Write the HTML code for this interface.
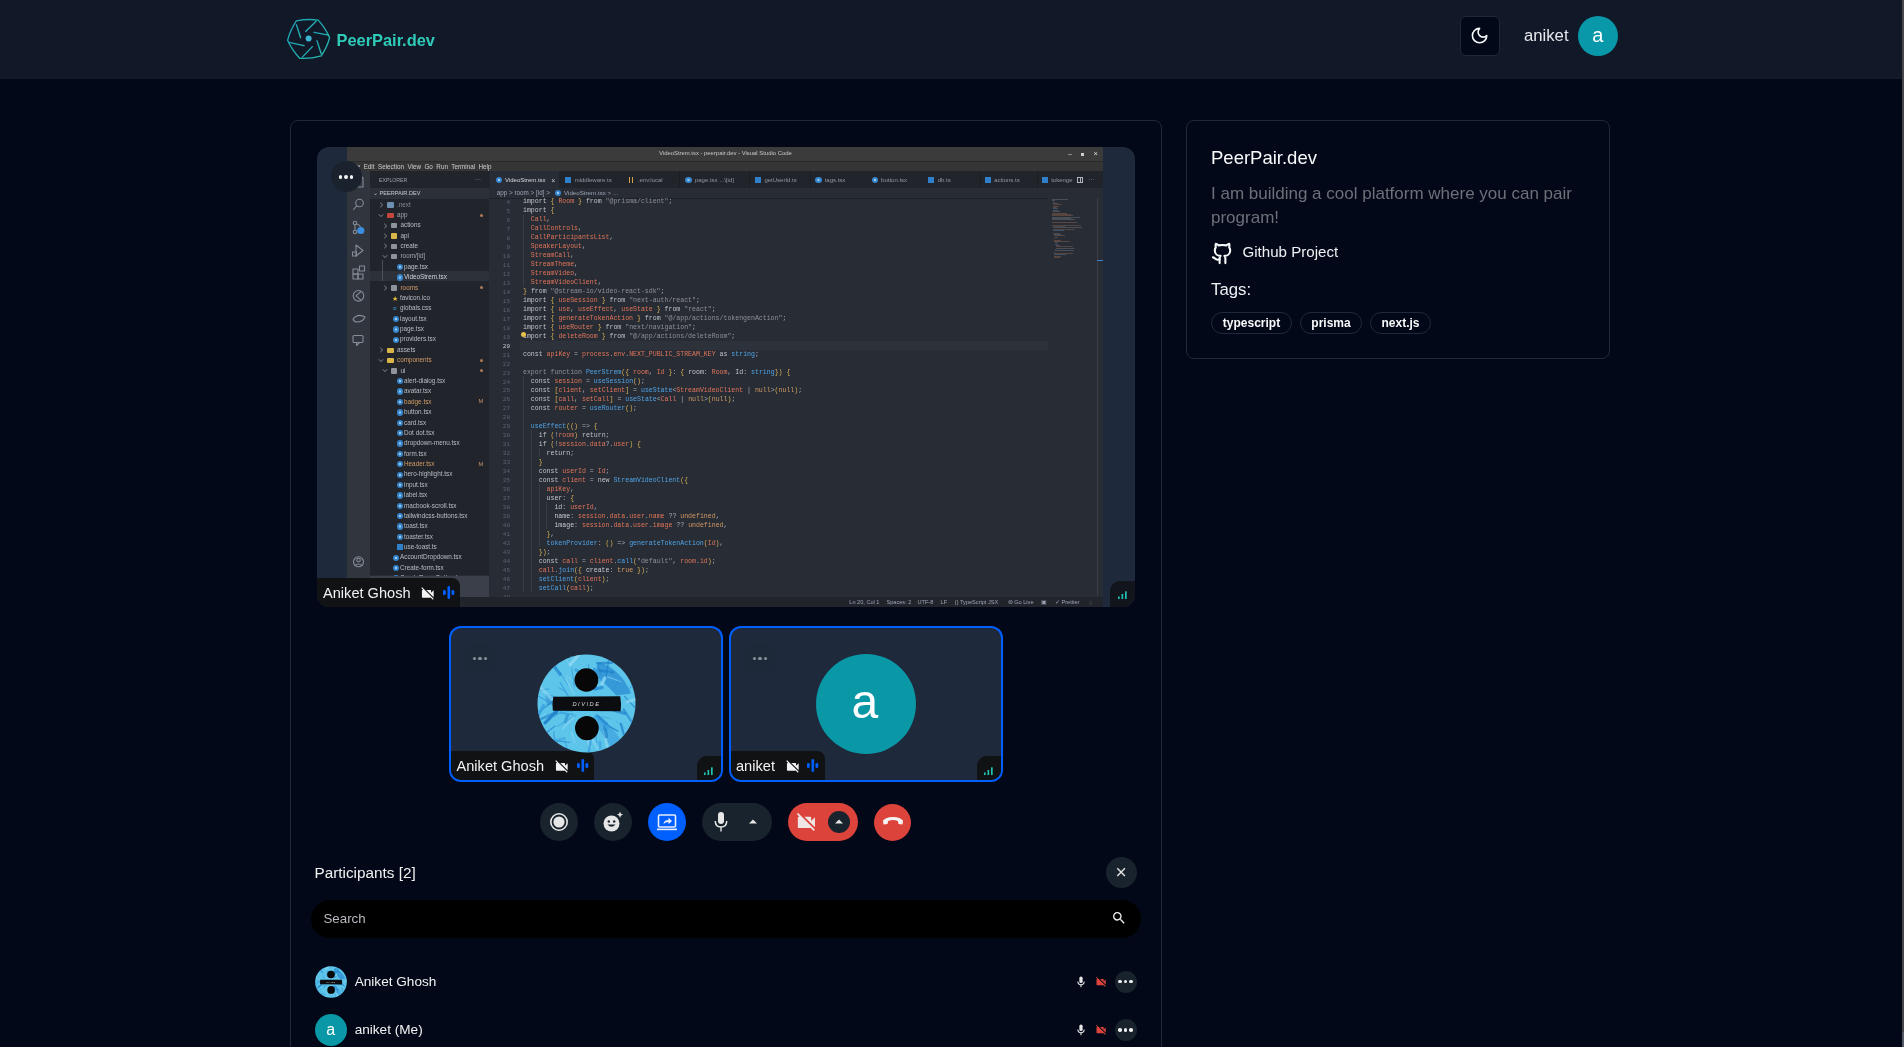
<!DOCTYPE html>
<html><head><meta charset="utf-8">
<style>
*{box-sizing:border-box;margin:0;padding:0}
html,body{width:1904px;height:1047px;overflow:hidden;background:#020817}
body{position:relative;font-family:"Liberation Sans",sans-serif;color:#f8fafc}
.abs{position:absolute}
.t{position:absolute;white-space:nowrap;line-height:1}
.card{position:absolute;border:1px solid #1e293b;border-radius:8px}
#vsc .t{font-family:"Liberation Sans",sans-serif}
.cl{position:absolute;white-space:pre;line-height:1;font-family:"Liberation Mono",monospace}
</style></head><body><div id="root" style="position:absolute;left:0;top:0;width:1904px;height:1047px;will-change:transform;background:#020817">
<div class="abs" style="left:0;top:0;width:1904px;height:79px;background:#111827;border-bottom:1px solid #131b29"></div><svg class="abs" style="left:280px;top:10px" width="60" height="60" viewBox="0 0 60 60">
<defs><linearGradient id="lg" x1="0" y1="0" x2="1" y2="1"><stop offset="0" stop-color="#1b9fb3"/><stop offset="1" stop-color="#27bcb0"/></linearGradient></defs>
<g fill="none" stroke="url(#lg)" stroke-width="1.35" stroke-linecap="round" stroke-linejoin="round"><path d="M16.4,10.9 Q27.2,8.6 38.2,10.1 Q45.4,17.9 49.6,27.7 Q47.1,37.5 41.2,45.8 Q30.6,48.9 19.7,48.3 Q12.1,40.3 7.6,30.3 Q10.3,19.8 16.4,10.9 Z"/><line x1="36.1" y1="11.3" x2="25.6" y2="21.4"/><line x1="16.4" y1="14.7" x2="20.6" y2="27.7"/><line x1="34.0" y1="22.3" x2="48.7" y2="25.2"/><line x1="37.0" y1="30.7" x2="41.2" y2="43.7"/><line x1="32.4" y1="36.6" x2="22.3" y2="47.1"/><line x1="9.2" y1="32.4" x2="24.0" y2="35.7"/></g>
<circle cx="28.600000000000023" cy="28.6" r="3" fill="#3cb4d2"/></svg><div class="t" style="left:336.50px;top:32.12px;font-size:16.4px;color:#2fcbb9;font-weight:bold;font-family:"Liberation Sans",sans-serif;">PeerPair.dev</div><div class="abs" style="left:1460px;top:16px;width:40px;height:40px;border:1px solid #1e293b;border-radius:6px;background:#020817"></div><svg class="abs" style="left:1470px;top:26px" width="19.2" height="19.2" viewBox="0 0 24 24" fill="none" stroke="#f8fafc" stroke-width="2" stroke-linecap="round" stroke-linejoin="round"><path d="M12 3a6 6 0 0 0 9 9 9 9 0 1 1-9-9Z"/></svg><div class="t" style="left:1524.00px;top:27.56px;font-size:16.7px;color:#e5e7eb;font-weight:normal;font-family:"Liberation Sans",sans-serif;">aniket</div><div class="abs" style="left:1578px;top:16px;width:40px;height:40px;border-radius:50%;background:#0898a9"></div><div class="t" style="left:1592.20px;top:25.07px;font-size:20px;color:#ffffff;font-weight:normal;font-family:"Liberation Sans",sans-serif;">a</div><div class="card" style="left:290px;top:120px;width:872px;height:1000px"></div><div class="card" style="left:1186px;top:120px;width:424px;height:239px"></div><div class="t" style="left:1211.00px;top:149.44px;font-size:18.5px;color:#f8fafc;font-weight:normal;font-family:"Liberation Sans",sans-serif;">PeerPair.dev</div><div class="t" style="left:1211.00px;top:185.01px;font-size:17px;color:#6d7079;font-weight:normal;font-family:"Liberation Sans",sans-serif;">I am building a cool platform where you can pair</div><div class="t" style="left:1211.00px;top:209.01px;font-size:17px;color:#6d7079;font-weight:normal;font-family:"Liberation Sans",sans-serif;">program!</div><svg class="abs" style="left:1210.5px;top:241.5px" width="23" height="23" viewBox="0 0 24 24" fill="none" stroke="#f8fafc" stroke-width="2.2" stroke-linecap="round" stroke-linejoin="round"><path d="M15 22v-4a4.8 4.8 0 0 0-1-3.5c3 0 6-2 6-5.5.08-1.25-.27-2.48-1-3.5.28-1.15.28-2.35 0-3.5 0 0-1 0-3 1.5-2.64-.5-5.36-.5-8 0C6 2 5 2 5 2c-.3 1.15-.3 2.35 0 3.5A5.403 5.403 0 0 0 4 9c0 3.5 3 5.5 6 5.5-.39.49-.68 1.05-.85 1.65-.17.6-.22 1.23-.15 1.85v4"/><path d="M9 18c-4.51 2-5-2-7-2"/></svg><div class="t" style="left:1242.50px;top:244.22px;font-size:15.1px;color:#eef0f3;font-weight:normal;font-family:"Liberation Sans",sans-serif;">Github Project</div><div class="t" style="left:1211.00px;top:281.78px;font-size:16.8px;color:#eef0f3;font-weight:normal;font-family:"Liberation Sans",sans-serif;">Tags:</div><div class="abs" style="left:1211px;top:312px;width:81px;height:22px;border:1px solid #1e293b;border-radius:11px;font-size:12px;font-weight:bold;color:#f8fafc;text-align:center;line-height:20px">typescript</div><div class="abs" style="left:1300px;top:312px;width:62px;height:22px;border:1px solid #1e293b;border-radius:11px;font-size:12px;font-weight:bold;color:#f8fafc;text-align:center;line-height:20px">prisma</div><div class="abs" style="left:1370px;top:312px;width:61px;height:22px;border:1px solid #1e293b;border-radius:11px;font-size:12px;font-weight:bold;color:#f8fafc;text-align:center;line-height:20px">next.js</div><div class="abs" style="left:317px;top:147px;width:818px;height:460px;background:#1e293b;border-radius:12px;overflow:hidden"><div id="vsc" class="abs" style="left:30px;top:0;width:756px;height:460px;background:#282c34;overflow:hidden"><div class="abs" style="left:0.0px;top:0.0px;width:756.0px;height:14.3px;background:#3b3b3b;"></div><div class="abs" style="left:0.0px;top:14.3px;width:756.0px;height:9.9px;background:#353535;"></div><div class="abs" style="left:0.0px;top:14.0px;width:756.0px;height:1.0px;background:#2b2b2b;"></div><div class="t" style="left:312.00px;top:3.81px;font-size:5.9px;color:#c8c8c8;font-weight:normal;font-family:"Liberation Sans",sans-serif;">VideoStrem.tsx - peerpair.dev - Visual Studio Code</div><div class="t" style="left:721.00px;top:2.57px;font-size:7px;color:#cfcfcf;font-weight:normal;font-family:"Liberation Sans",sans-serif;">&#8211;</div><div class="abs" style="left:734.0px;top:6.0px;width:3.0px;height:2.5px;background:#cfcfcf;"></div><div class="t" style="left:746.50px;top:3.15px;font-size:7.5px;color:#dcdcdc;font-weight:normal;font-family:"Liberation Sans",sans-serif;">&#215;</div><div class="t" style="left:3.00px;top:16.97px;font-size:6.3px;color:#cfcfcf;font-weight:normal;font-family:"Liberation Sans",sans-serif;">File&nbsp; Edit&nbsp; Selection&nbsp; View&nbsp; Go&nbsp; Run&nbsp; Terminal&nbsp; Help</div><div class="abs" style="left:0.0px;top:24.2px;width:23.0px;height:425.3px;background:#30353e;"></div><div class="abs" style="left:23.0px;top:24.2px;width:119.0px;height:404.3px;background:#21252b;"></div><div class="t" style="left:32.00px;top:30.90px;font-size:5.2px;color:#9aa0a9;font-weight:normal;font-family:"Liberation Sans",sans-serif;">EXPLORER</div><div class="t" style="left:128.00px;top:28.92px;font-size:6px;color:#aab0ba;font-weight:normal;font-family:"Liberation Sans",sans-serif;">&#183;&#183;&#183;</div><div class="abs" style="left:23.0px;top:41.0px;width:119.0px;height:10.5px;background:#2b3039;"></div><div class="t" style="left:26.00px;top:44.26px;font-size:5.6px;color:#c0c4cc;font-weight:normal;font-family:"Liberation Sans",sans-serif;">&#8964;</div><div class="t" style="left:32.50px;top:44.26px;font-size:5.6px;color:#c8ccd4;font-weight:normal;font-family:"Liberation Sans",sans-serif;">PEERPAIR.DEV</div><div class="abs" style="left:23.0px;top:124.0px;width:119.0px;height:10.3px;background:#2c313a;"></div><svg class="abs" style="left:32.0px;top:54.8px" width="5" height="6" viewBox="0 0 5 6"><path d="M1.3 0.8 L3.6 3 L1.3 5.2" fill="none" stroke="#a0a5ad" stroke-width="0.8"/></svg><div class="abs" style="left:40.0px;top:55.3px;width:6.5px;height:5.3px;background:#6c8fb2;border-radius:1px"></div><div class="t" style="left:50.00px;top:54.52px;font-size:6.35px;color:#7f8590;font-weight:normal;font-family:"Liberation Sans",sans-serif;">.next</div><svg class="abs" style="left:31.0px;top:65.7px" width="6" height="5" viewBox="0 0 6 5"><path d="M0.8 1.3 L3 3.6 L5.2 1.3" fill="none" stroke="#a0a5ad" stroke-width="0.8"/></svg><div class="abs" style="left:40.0px;top:65.7px;width:6.5px;height:5.3px;background:#c4463d;border-radius:1px"></div><div class="t" style="left:50.00px;top:64.90px;font-size:6.35px;color:#9da3ad;font-weight:normal;font-family:"Liberation Sans",sans-serif;">app</div><div class="abs" style="left:133px;top:66.7px;width:3px;height:3px;border-radius:50%;background:#b07a55"></div><svg class="abs" style="left:35.5px;top:75.6px" width="5" height="6" viewBox="0 0 5 6"><path d="M1.3 0.8 L3.6 3 L1.3 5.2" fill="none" stroke="#a0a5ad" stroke-width="0.8"/></svg><div class="abs" style="left:43.5px;top:76.1px;width:6.5px;height:5.3px;background:#8d929b;border-radius:1px"></div><div class="t" style="left:53.50px;top:75.28px;font-size:6.35px;color:#b8bcc4;font-weight:normal;font-family:"Liberation Sans",sans-serif;">actions</div><svg class="abs" style="left:35.5px;top:85.9px" width="5" height="6" viewBox="0 0 5 6"><path d="M1.3 0.8 L3.6 3 L1.3 5.2" fill="none" stroke="#a0a5ad" stroke-width="0.8"/></svg><div class="abs" style="left:43.5px;top:86.4px;width:6.5px;height:5.3px;background:#d9b54a;border-radius:1px"></div><div class="t" style="left:53.50px;top:85.66px;font-size:6.35px;color:#b8bcc4;font-weight:normal;font-family:"Liberation Sans",sans-serif;">api</div><svg class="abs" style="left:35.5px;top:96.3px" width="5" height="6" viewBox="0 0 5 6"><path d="M1.3 0.8 L3.6 3 L1.3 5.2" fill="none" stroke="#a0a5ad" stroke-width="0.8"/></svg><div class="abs" style="left:43.5px;top:96.8px;width:6.5px;height:5.3px;background:#8d929b;border-radius:1px"></div><div class="t" style="left:53.50px;top:96.04px;font-size:6.35px;color:#b8bcc4;font-weight:normal;font-family:"Liberation Sans",sans-serif;">create</div><svg class="abs" style="left:34.5px;top:107.2px" width="6" height="5" viewBox="0 0 6 5"><path d="M0.8 1.3 L3 3.6 L5.2 1.3" fill="none" stroke="#a0a5ad" stroke-width="0.8"/></svg><div class="abs" style="left:43.5px;top:107.2px;width:6.5px;height:5.3px;background:#8d929b;border-radius:1px"></div><div class="t" style="left:53.50px;top:106.42px;font-size:6.35px;color:#9da3ad;font-weight:normal;font-family:"Liberation Sans",sans-serif;">room/[id]</div><div class="abs" style="left:49.5px;top:116.9px;width:6.4px;height:6.4px;border-radius:50%;background:radial-gradient(circle,#9cc8ee 0 18%,#3a8ad0 30%,#2f7cc4 100%)"></div><div class="t" style="left:57.00px;top:116.80px;font-size:6.35px;color:#c0c4cc;font-weight:normal;font-family:"Liberation Sans",sans-serif;">page.tsx</div><div class="abs" style="left:49.5px;top:127.3px;width:6.4px;height:6.4px;border-radius:50%;background:radial-gradient(circle,#9cc8ee 0 18%,#3a8ad0 30%,#2f7cc4 100%)"></div><div class="t" style="left:57.00px;top:127.18px;font-size:6.35px;color:#d0d4dc;font-weight:normal;font-family:"Liberation Sans",sans-serif;">VideoStrem.tsx</div><svg class="abs" style="left:35.5px;top:137.8px" width="5" height="6" viewBox="0 0 5 6"><path d="M1.3 0.8 L3.6 3 L1.3 5.2" fill="none" stroke="#a0a5ad" stroke-width="0.8"/></svg><div class="abs" style="left:43.5px;top:138.3px;width:6.5px;height:5.3px;background:#8d929b;border-radius:1px"></div><div class="t" style="left:53.50px;top:137.56px;font-size:6.35px;color:#d19a66;font-weight:normal;font-family:"Liberation Sans",sans-serif;">rooms</div><div class="abs" style="left:133px;top:139.3px;width:3px;height:3px;border-radius:50%;background:#b07a55"></div><div class="t" style="left:45.00px;top:147.89px;font-size:7px;color:#e8b83a;font-weight:normal;font-family:"Liberation Sans",sans-serif;">&#9733;</div><div class="t" style="left:53.00px;top:147.94px;font-size:6.35px;color:#b8bcc4;font-weight:normal;font-family:"Liberation Sans",sans-serif;">favicon.ico</div><div class="t" style="left:45.50px;top:158.27px;font-size:7px;color:#3d9fe0;font-weight:bold;font-family:"Liberation Sans",sans-serif;">&#8801;</div><div class="t" style="left:53.00px;top:158.32px;font-size:6.35px;color:#b8bcc4;font-weight:normal;font-family:"Liberation Sans",sans-serif;">globals.css</div><div class="abs" style="left:45.5px;top:168.8px;width:6.4px;height:6.4px;border-radius:50%;background:radial-gradient(circle,#9cc8ee 0 18%,#3a8ad0 30%,#2f7cc4 100%)"></div><div class="t" style="left:53.00px;top:168.70px;font-size:6.35px;color:#b8bcc4;font-weight:normal;font-family:"Liberation Sans",sans-serif;">layout.tsx</div><div class="abs" style="left:45.5px;top:179.2px;width:6.4px;height:6.4px;border-radius:50%;background:radial-gradient(circle,#9cc8ee 0 18%,#3a8ad0 30%,#2f7cc4 100%)"></div><div class="t" style="left:53.00px;top:179.08px;font-size:6.35px;color:#b8bcc4;font-weight:normal;font-family:"Liberation Sans",sans-serif;">page.tsx</div><div class="abs" style="left:45.5px;top:189.5px;width:6.4px;height:6.4px;border-radius:50%;background:radial-gradient(circle,#9cc8ee 0 18%,#3a8ad0 30%,#2f7cc4 100%)"></div><div class="t" style="left:53.00px;top:189.46px;font-size:6.35px;color:#b8bcc4;font-weight:normal;font-family:"Liberation Sans",sans-serif;">providers.tsx</div><svg class="abs" style="left:32.0px;top:200.1px" width="5" height="6" viewBox="0 0 5 6"><path d="M1.3 0.8 L3.6 3 L1.3 5.2" fill="none" stroke="#a0a5ad" stroke-width="0.8"/></svg><div class="abs" style="left:40.0px;top:200.6px;width:6.5px;height:5.3px;background:#d9b54a;border-radius:1px"></div><div class="t" style="left:50.00px;top:199.84px;font-size:6.35px;color:#b8bcc4;font-weight:normal;font-family:"Liberation Sans",sans-serif;">assets</div><svg class="abs" style="left:31.0px;top:211.0px" width="6" height="5" viewBox="0 0 6 5"><path d="M0.8 1.3 L3 3.6 L5.2 1.3" fill="none" stroke="#a0a5ad" stroke-width="0.8"/></svg><div class="abs" style="left:40.0px;top:211.0px;width:6.5px;height:5.3px;background:#d9b54a;border-radius:1px"></div><div class="t" style="left:50.00px;top:210.22px;font-size:6.35px;color:#d19a66;font-weight:normal;font-family:"Liberation Sans",sans-serif;">components</div><div class="abs" style="left:133px;top:212.0px;width:3px;height:3px;border-radius:50%;background:#b07a55"></div><svg class="abs" style="left:34.5px;top:221.4px" width="6" height="5" viewBox="0 0 6 5"><path d="M0.8 1.3 L3 3.6 L5.2 1.3" fill="none" stroke="#a0a5ad" stroke-width="0.8"/></svg><div class="abs" style="left:43.5px;top:221.4px;width:6.5px;height:5.3px;background:#8d929b;border-radius:1px"></div><div class="t" style="left:53.50px;top:220.60px;font-size:6.35px;color:#b8bcc4;font-weight:normal;font-family:"Liberation Sans",sans-serif;">ui</div><div class="abs" style="left:133px;top:222.4px;width:3px;height:3px;border-radius:50%;background:#b07a55"></div><div class="abs" style="left:49.5px;top:231.1px;width:6.4px;height:6.4px;border-radius:50%;background:radial-gradient(circle,#9cc8ee 0 18%,#3a8ad0 30%,#2f7cc4 100%)"></div><div class="t" style="left:57.00px;top:230.98px;font-size:6.35px;color:#b8bcc4;font-weight:normal;font-family:"Liberation Sans",sans-serif;">alert-dialog.tsx</div><div class="abs" style="left:49.5px;top:241.4px;width:6.4px;height:6.4px;border-radius:50%;background:radial-gradient(circle,#9cc8ee 0 18%,#3a8ad0 30%,#2f7cc4 100%)"></div><div class="t" style="left:57.00px;top:241.36px;font-size:6.35px;color:#b8bcc4;font-weight:normal;font-family:"Liberation Sans",sans-serif;">avatar.tsx</div><div class="abs" style="left:49.5px;top:251.8px;width:6.4px;height:6.4px;border-radius:50%;background:radial-gradient(circle,#9cc8ee 0 18%,#3a8ad0 30%,#2f7cc4 100%)"></div><div class="t" style="left:57.00px;top:251.74px;font-size:6.35px;color:#d19a66;font-weight:normal;font-family:"Liberation Sans",sans-serif;">badge.tsx</div><div class="t" style="left:131.50px;top:252.38px;font-size:5.6px;color:#c9956a;font-weight:normal;font-family:"Liberation Sans",sans-serif;">M</div><div class="abs" style="left:49.5px;top:262.2px;width:6.4px;height:6.4px;border-radius:50%;background:radial-gradient(circle,#9cc8ee 0 18%,#3a8ad0 30%,#2f7cc4 100%)"></div><div class="t" style="left:57.00px;top:262.12px;font-size:6.35px;color:#b8bcc4;font-weight:normal;font-family:"Liberation Sans",sans-serif;">button.tsx</div><div class="abs" style="left:49.5px;top:272.6px;width:6.4px;height:6.4px;border-radius:50%;background:radial-gradient(circle,#9cc8ee 0 18%,#3a8ad0 30%,#2f7cc4 100%)"></div><div class="t" style="left:57.00px;top:272.50px;font-size:6.35px;color:#b8bcc4;font-weight:normal;font-family:"Liberation Sans",sans-serif;">card.tsx</div><div class="abs" style="left:49.5px;top:283.0px;width:6.4px;height:6.4px;border-radius:50%;background:radial-gradient(circle,#9cc8ee 0 18%,#3a8ad0 30%,#2f7cc4 100%)"></div><div class="t" style="left:57.00px;top:282.88px;font-size:6.35px;color:#b8bcc4;font-weight:normal;font-family:"Liberation Sans",sans-serif;">Dot dot.tsx</div><div class="abs" style="left:49.5px;top:293.3px;width:6.4px;height:6.4px;border-radius:50%;background:radial-gradient(circle,#9cc8ee 0 18%,#3a8ad0 30%,#2f7cc4 100%)"></div><div class="t" style="left:57.00px;top:293.26px;font-size:6.35px;color:#b8bcc4;font-weight:normal;font-family:"Liberation Sans",sans-serif;">dropdown-menu.tsx</div><div class="abs" style="left:49.5px;top:303.7px;width:6.4px;height:6.4px;border-radius:50%;background:radial-gradient(circle,#9cc8ee 0 18%,#3a8ad0 30%,#2f7cc4 100%)"></div><div class="t" style="left:57.00px;top:303.64px;font-size:6.35px;color:#b8bcc4;font-weight:normal;font-family:"Liberation Sans",sans-serif;">form.tsx</div><div class="abs" style="left:49.5px;top:314.1px;width:6.4px;height:6.4px;border-radius:50%;background:radial-gradient(circle,#9cc8ee 0 18%,#3a8ad0 30%,#2f7cc4 100%)"></div><div class="t" style="left:57.00px;top:314.02px;font-size:6.35px;color:#d19a66;font-weight:normal;font-family:"Liberation Sans",sans-serif;">Header.tsx</div><div class="t" style="left:131.50px;top:314.66px;font-size:5.6px;color:#c9956a;font-weight:normal;font-family:"Liberation Sans",sans-serif;">M</div><div class="abs" style="left:49.5px;top:324.5px;width:6.4px;height:6.4px;border-radius:50%;background:radial-gradient(circle,#9cc8ee 0 18%,#3a8ad0 30%,#2f7cc4 100%)"></div><div class="t" style="left:57.00px;top:324.40px;font-size:6.35px;color:#b8bcc4;font-weight:normal;font-family:"Liberation Sans",sans-serif;">hero-highlight.tsx</div><div class="abs" style="left:49.5px;top:334.9px;width:6.4px;height:6.4px;border-radius:50%;background:radial-gradient(circle,#9cc8ee 0 18%,#3a8ad0 30%,#2f7cc4 100%)"></div><div class="t" style="left:57.00px;top:334.78px;font-size:6.35px;color:#b8bcc4;font-weight:normal;font-family:"Liberation Sans",sans-serif;">input.tsx</div><div class="abs" style="left:49.5px;top:345.2px;width:6.4px;height:6.4px;border-radius:50%;background:radial-gradient(circle,#9cc8ee 0 18%,#3a8ad0 30%,#2f7cc4 100%)"></div><div class="t" style="left:57.00px;top:345.16px;font-size:6.35px;color:#b8bcc4;font-weight:normal;font-family:"Liberation Sans",sans-serif;">label.tsx</div><div class="abs" style="left:49.5px;top:355.6px;width:6.4px;height:6.4px;border-radius:50%;background:radial-gradient(circle,#9cc8ee 0 18%,#3a8ad0 30%,#2f7cc4 100%)"></div><div class="t" style="left:57.00px;top:355.54px;font-size:6.35px;color:#b8bcc4;font-weight:normal;font-family:"Liberation Sans",sans-serif;">macbook-scroll.tsx</div><div class="abs" style="left:49.5px;top:366.0px;width:6.4px;height:6.4px;border-radius:50%;background:radial-gradient(circle,#9cc8ee 0 18%,#3a8ad0 30%,#2f7cc4 100%)"></div><div class="t" style="left:57.00px;top:365.92px;font-size:6.35px;color:#b8bcc4;font-weight:normal;font-family:"Liberation Sans",sans-serif;">tailwindcss-buttons.tsx</div><div class="abs" style="left:49.5px;top:376.4px;width:6.4px;height:6.4px;border-radius:50%;background:radial-gradient(circle,#9cc8ee 0 18%,#3a8ad0 30%,#2f7cc4 100%)"></div><div class="t" style="left:57.00px;top:376.30px;font-size:6.35px;color:#b8bcc4;font-weight:normal;font-family:"Liberation Sans",sans-serif;">toast.tsx</div><div class="abs" style="left:49.5px;top:386.8px;width:6.4px;height:6.4px;border-radius:50%;background:radial-gradient(circle,#9cc8ee 0 18%,#3a8ad0 30%,#2f7cc4 100%)"></div><div class="t" style="left:57.00px;top:386.68px;font-size:6.35px;color:#b8bcc4;font-weight:normal;font-family:"Liberation Sans",sans-serif;">toaster.tsx</div><div class="abs" style="left:49.5px;top:397.3px;width:6.0px;height:6.0px;background:#2f7fc9;"></div><div class="t" style="left:57.00px;top:397.06px;font-size:6.35px;color:#b8bcc4;font-weight:normal;font-family:"Liberation Sans",sans-serif;">use-toast.ts</div><div class="abs" style="left:45.5px;top:407.5px;width:6.4px;height:6.4px;border-radius:50%;background:radial-gradient(circle,#9cc8ee 0 18%,#3a8ad0 30%,#2f7cc4 100%)"></div><div class="t" style="left:53.00px;top:407.44px;font-size:6.35px;color:#b8bcc4;font-weight:normal;font-family:"Liberation Sans",sans-serif;">AccountDropdown.tsx</div><div class="abs" style="left:45.5px;top:417.9px;width:6.4px;height:6.4px;border-radius:50%;background:radial-gradient(circle,#9cc8ee 0 18%,#3a8ad0 30%,#2f7cc4 100%)"></div><div class="t" style="left:53.00px;top:417.82px;font-size:6.35px;color:#b8bcc4;font-weight:normal;font-family:"Liberation Sans",sans-serif;">Create-form.tsx</div><div class="abs" style="left:45.5px;top:428.3px;width:6.4px;height:6.4px;border-radius:50%;background:radial-gradient(circle,#9cc8ee 0 18%,#3a8ad0 30%,#2f7cc4 100%)"></div><div class="t" style="left:53.00px;top:428.20px;font-size:6.35px;color:#b8bcc4;font-weight:normal;font-family:"Liberation Sans",sans-serif;">CreateRoomButton.tsx</div><div class="abs" style="left:23.0px;top:428.5px;width:119.0px;height:21.0px;background:#3a3f4a;"></div><div class="abs" style="left:34.5px;top:113.0px;width:0.5px;height:21.0px;background:#4a4f58;"></div><svg class="abs" style="left:0;top:24.2px" width="23" height="425" viewBox="0 0 23 425">
<g fill="none" stroke="#868b94" stroke-width="1.1" stroke-linecap="round" stroke-linejoin="round">
<path d="M7 4 h6 l3 3 v9 h-9 z"/>
<circle cx="12.5" cy="32" r="3.8"/><line x1="9.8" y1="34.8" x2="6.5" y2="38.5"/>
<circle cx="8" cy="52" r="1.7"/><circle cx="8" cy="61" r="1.7"/><line x1="8" y1="53.7" x2="8" y2="59.3"/><path d="M9.5 53 q4 1 4 4"/>
<path d="M9 74 L16 79.5 L9 85 Z"/><rect x="5.5" y="81" width="4" height="4"/>
<rect x="6" y="98" width="5" height="5"/><rect x="6" y="103" width="5" height="5"/><rect x="11" y="103" width="5" height="5"/><rect x="12.5" y="95" width="5" height="5"/>
<circle cx="11.5" cy="124.8" r="5.3"/><path d="M14 120.5 l-5 4.3 l5 4.3"/>
<path d="M6 148 q5 -6 12 -2 q-2 5 -8 5 q-3 0 -4 -3z"/>
<rect x="6" y="164.5" width="10" height="7" rx="1"/><path d="M9.5 171.5 v3 l3 -3"/>
<circle cx="11.5" cy="390.8" r="5"/><circle cx="11.5" cy="389" r="1.8"/><path d="M8 394.5 q3.5 -3 7 0"/>
</g>
<circle cx="13.8" cy="59.5" r="3.6" fill="#3b8ee0"/>
</svg><div class="abs" style="left:142.0px;top:24.2px;width:614.0px;height:16.8px;background:#21252b;"></div><div class="abs" style="left:143.0px;top:24.2px;width:69.0px;height:16.8px;background:#282c34;"></div><div class="abs" style="left:148.5px;top:30.0px;width:6.4px;height:6.4px;border-radius:50%;background:radial-gradient(circle,#9cc8ee 0 18%,#3a8ad0 30%,#2f7cc4 100%)"></div><div class="t" style="left:158.00px;top:30.02px;font-size:6px;color:#d7dae0;font-weight:normal;font-family:"Liberation Sans",sans-serif;">VideoStrem.tsx</div><div class="abs" style="left:218.2px;top:30.0px;width:6.0px;height:6.0px;background:#2f7fc9;"></div><div class="t" style="left:227.70px;top:30.02px;font-size:6px;color:#8f96a1;font-weight:normal;font-family:"Liberation Sans",sans-serif;">middleware.ts</div><div class="abs" style="left:282.3px;top:30.0px;width:1.0px;height:6.0px;background:#d9a04a;"></div><div class="abs" style="left:285.3px;top:30.0px;width:1.0px;height:6.0px;background:#d9a04a;"></div><div class="t" style="left:290.80px;top:30.02px;font-size:6px;color:#8f96a1;font-weight:normal;font-family:"Liberation Sans",sans-serif;">.env.local</div><div class="abs" style="left:338.4px;top:30.0px;width:6.4px;height:6.4px;border-radius:50%;background:radial-gradient(circle,#9cc8ee 0 18%,#3a8ad0 30%,#2f7cc4 100%)"></div><div class="t" style="left:347.90px;top:30.02px;font-size:6px;color:#8f96a1;font-weight:normal;font-family:"Liberation Sans",sans-serif;">page.tsx ...\[id]</div><div class="abs" style="left:407.9px;top:30.0px;width:6.0px;height:6.0px;background:#2f7fc9;"></div><div class="t" style="left:417.40px;top:30.02px;font-size:6px;color:#8f96a1;font-weight:normal;font-family:"Liberation Sans",sans-serif;">getUserId.ts</div><div class="abs" style="left:468.2px;top:30.0px;width:6.4px;height:6.4px;border-radius:50%;background:radial-gradient(circle,#9cc8ee 0 18%,#3a8ad0 30%,#2f7cc4 100%)"></div><div class="t" style="left:477.70px;top:30.02px;font-size:6px;color:#8f96a1;font-weight:normal;font-family:"Liberation Sans",sans-serif;">tags.tsx</div><div class="abs" style="left:524.6px;top:30.0px;width:6.4px;height:6.4px;border-radius:50%;background:radial-gradient(circle,#9cc8ee 0 18%,#3a8ad0 30%,#2f7cc4 100%)"></div><div class="t" style="left:534.10px;top:30.02px;font-size:6px;color:#8f96a1;font-weight:normal;font-family:"Liberation Sans",sans-serif;">button.tsx</div><div class="abs" style="left:581.2px;top:30.0px;width:6.0px;height:6.0px;background:#2f7fc9;"></div><div class="t" style="left:590.70px;top:30.02px;font-size:6px;color:#8f96a1;font-weight:normal;font-family:"Liberation Sans",sans-serif;">db.ts</div><div class="abs" style="left:637.8px;top:30.0px;width:6.0px;height:6.0px;background:#2f7fc9;"></div><div class="t" style="left:647.30px;top:30.02px;font-size:6px;color:#8f96a1;font-weight:normal;font-family:"Liberation Sans",sans-serif;">actions.ts</div><div class="abs" style="left:694.7px;top:30.0px;width:6.0px;height:6.0px;background:#2f7fc9;"></div><div class="t" style="left:704.20px;top:30.02px;font-size:6px;color:#8f96a1;font-weight:normal;font-family:"Liberation Sans",sans-serif;">tokenge</div><div class="t" style="left:204.30px;top:29.57px;font-size:7px;color:#c8ccd4;font-weight:normal;font-family:"Liberation Sans",sans-serif;">&#215;</div><div class="abs" style="left:332.2px;top:24.2px;width:0.8px;height:16.8px;background:#1b1e23;"></div><div class="abs" style="left:401.9px;top:24.2px;width:0.8px;height:16.8px;background:#1b1e23;"></div><div class="abs" style="left:462.5px;top:24.2px;width:0.8px;height:16.8px;background:#1b1e23;"></div><div class="abs" style="left:632.6px;top:24.2px;width:0.8px;height:16.8px;background:#1b1e23;"></div><div class="abs" style="left:689.7px;top:24.2px;width:0.8px;height:16.8px;background:#1b1e23;"></div><div class="abs" style="left:730.0px;top:29.8px;width:6.0px;height:6.4px;background:transparent;border:1px solid #b0b4bb;border-left-width:1.5px;border-right-width:1.5px"></div><div class="abs" style="left:732.7px;top:29.8px;width:0.7px;height:6.4px;background:#b0b4bb;"></div><div class="t" style="left:741.50px;top:28.92px;font-size:6px;color:#b0b4bb;font-weight:normal;font-family:"Liberation Sans",sans-serif;">&#183;&#183;&#183;</div><div class="abs" style="left:142.0px;top:41.0px;width:614.0px;height:10.3px;background:#282c34;"></div><div class="abs" style="left:142.0px;top:51.3px;width:559.0px;height:1.0px;background:#1d2026;"></div><div class="t" style="left:149.80px;top:42.97px;font-size:6.3px;color:#9da5b4;font-weight:normal;font-family:"Liberation Sans",sans-serif;">app &gt; room &gt; [id] &gt;</div><div class="abs" style="left:207.5px;top:43.0px;width:6.4px;height:6.4px;border-radius:50%;background:radial-gradient(circle,#9cc8ee 0 18%,#3a8ad0 30%,#2f7cc4 100%)"></div><div class="t" style="left:217.00px;top:43.05px;font-size:6.2px;color:#9da5b4;font-weight:normal;font-family:"Liberation Sans",sans-serif;">VideoStrem.tsx &gt; ...</div><div class="abs" style="left:173.0px;top:193.5px;width:528.0px;height:9.0px;background:#2c313a;"></div><div class="abs" style="left:154.0px;top:193.5px;width:19.0px;height:9.0px;background:transparent;"></div><div class="cl" style="left:150px;width:13px;text-align:right;top:52.90px;font-size:6.0px;color:#5c6370">4</div><div class="cl" style="left:176px;top:52.48px;font-size:6.55px"><span style="color:#bfc2c8">import</span> <span style="color:#d8b255">{</span> <span style="color:#e0755a">Room</span> <span style="color:#d8b255">}</span> <span style="color:#bfc2c8">from</span> <span style="color:#8e9096">&quot;@prisma/client&quot;</span><span style="color:#a9aeb7">;</span></div><div class="cl" style="left:150px;width:13px;text-align:right;top:61.88px;font-size:6.0px;color:#5c6370">5</div><div class="cl" style="left:176px;top:61.46px;font-size:6.55px"><span style="color:#bfc2c8">import</span> <span style="color:#d8b255">{</span></div><div class="cl" style="left:150px;width:13px;text-align:right;top:70.86px;font-size:6.0px;color:#5c6370">6</div><div class="cl" style="left:176px;top:70.44px;font-size:6.55px">  <span style="color:#e0755a">Call</span><span style="color:#a9aeb7">,</span></div><div class="cl" style="left:150px;width:13px;text-align:right;top:79.84px;font-size:6.0px;color:#5c6370">7</div><div class="cl" style="left:176px;top:79.42px;font-size:6.55px">  <span style="color:#e0755a">CallControls</span><span style="color:#a9aeb7">,</span></div><div class="cl" style="left:150px;width:13px;text-align:right;top:88.82px;font-size:6.0px;color:#5c6370">8</div><div class="cl" style="left:176px;top:88.40px;font-size:6.55px">  <span style="color:#e0755a">CallParticipantsList</span><span style="color:#a9aeb7">,</span></div><div class="cl" style="left:150px;width:13px;text-align:right;top:97.80px;font-size:6.0px;color:#5c6370">9</div><div class="cl" style="left:176px;top:97.38px;font-size:6.55px">  <span style="color:#e0755a">SpeakerLayout</span><span style="color:#a9aeb7">,</span></div><div class="cl" style="left:150px;width:13px;text-align:right;top:106.78px;font-size:6.0px;color:#5c6370">10</div><div class="cl" style="left:176px;top:106.36px;font-size:6.55px">  <span style="color:#e0755a">StreamCall</span><span style="color:#a9aeb7">,</span></div><div class="cl" style="left:150px;width:13px;text-align:right;top:115.76px;font-size:6.0px;color:#5c6370">11</div><div class="cl" style="left:176px;top:115.34px;font-size:6.55px">  <span style="color:#e0755a">StreamTheme</span><span style="color:#a9aeb7">,</span></div><div class="cl" style="left:150px;width:13px;text-align:right;top:124.74px;font-size:6.0px;color:#5c6370">12</div><div class="cl" style="left:176px;top:124.32px;font-size:6.55px">  <span style="color:#e0755a">StreamVideo</span><span style="color:#a9aeb7">,</span></div><div class="cl" style="left:150px;width:13px;text-align:right;top:133.72px;font-size:6.0px;color:#5c6370">13</div><div class="cl" style="left:176px;top:133.30px;font-size:6.55px">  <span style="color:#e0755a">StreamVideoClient</span><span style="color:#a9aeb7">,</span></div><div class="cl" style="left:150px;width:13px;text-align:right;top:142.70px;font-size:6.0px;color:#5c6370">14</div><div class="cl" style="left:176px;top:142.28px;font-size:6.55px"><span style="color:#d8b255">}</span> <span style="color:#bfc2c8">from</span> <span style="color:#8e9096">&quot;@stream-io/video-react-sdk&quot;</span><span style="color:#a9aeb7">;</span></div><div class="cl" style="left:150px;width:13px;text-align:right;top:151.68px;font-size:6.0px;color:#5c6370">15</div><div class="cl" style="left:176px;top:151.26px;font-size:6.55px"><span style="color:#bfc2c8">import</span> <span style="color:#d8b255">{</span> <span style="color:#e0755a">useSession</span> <span style="color:#d8b255">}</span> <span style="color:#bfc2c8">from</span> <span style="color:#8e9096">&quot;next-auth/react&quot;</span><span style="color:#a9aeb7">;</span></div><div class="cl" style="left:150px;width:13px;text-align:right;top:160.66px;font-size:6.0px;color:#5c6370">16</div><div class="cl" style="left:176px;top:160.24px;font-size:6.55px"><span style="color:#bfc2c8">import</span> <span style="color:#d8b255">{</span> <span style="color:#e0755a">use</span><span style="color:#a9aeb7">,</span> <span style="color:#e0755a">useEffect</span><span style="color:#a9aeb7">,</span> <span style="color:#e0755a">useState</span> <span style="color:#d8b255">}</span> <span style="color:#bfc2c8">from</span> <span style="color:#8e9096">&quot;react&quot;</span><span style="color:#a9aeb7">;</span></div><div class="cl" style="left:150px;width:13px;text-align:right;top:169.64px;font-size:6.0px;color:#5c6370">17</div><div class="cl" style="left:176px;top:169.22px;font-size:6.55px"><span style="color:#bfc2c8">import</span> <span style="color:#d8b255">{</span> <span style="color:#e0755a">generateTokenAction</span> <span style="color:#d8b255">}</span> <span style="color:#bfc2c8">from</span> <span style="color:#8e9096">&quot;@/app/actions/tokengenAction&quot;</span><span style="color:#a9aeb7">;</span></div><div class="cl" style="left:150px;width:13px;text-align:right;top:178.62px;font-size:6.0px;color:#5c6370">18</div><div class="cl" style="left:176px;top:178.20px;font-size:6.55px"><span style="color:#bfc2c8">import</span> <span style="color:#d8b255">{</span> <span style="color:#e0755a">useRouter</span> <span style="color:#d8b255">}</span> <span style="color:#bfc2c8">from</span> <span style="color:#8e9096">&quot;next/navigation&quot;</span><span style="color:#a9aeb7">;</span></div><div class="cl" style="left:150px;width:13px;text-align:right;top:187.60px;font-size:6.0px;color:#5c6370">19</div><div class="cl" style="left:176px;top:187.18px;font-size:6.55px"><span style="color:#bfc2c8">import</span> <span style="color:#d8b255">{</span> <span style="color:#e0755a">deleteRoom</span> <span style="color:#d8b255">}</span> <span style="color:#bfc2c8">from</span> <span style="color:#8e9096">&quot;@/app/actions/deleteRoom&quot;</span><span style="color:#a9aeb7">;</span></div><div class="cl" style="left:150px;width:13px;text-align:right;top:196.58px;font-size:6.0px;color:#c8ccd4">20</div><div class="cl" style="left:150px;width:13px;text-align:right;top:205.56px;font-size:6.0px;color:#5c6370">21</div><div class="cl" style="left:176px;top:205.14px;font-size:6.55px"><span style="color:#bfc2c8">const</span> <span style="color:#e0755a">apiKey</span> <span style="color:#a9aeb7">=</span> <span style="color:#e0755a">process</span><span style="color:#a9aeb7">.</span><span style="color:#e0755a">env</span><span style="color:#a9aeb7">.</span><span style="color:#e0755a">NEXT_PUBLIC_STREAM_KEY</span> <span style="color:#bfc2c8">as</span> <span style="color:#4fa3e6">string</span><span style="color:#a9aeb7">;</span></div><div class="cl" style="left:150px;width:13px;text-align:right;top:214.54px;font-size:6.0px;color:#5c6370">22</div><div class="cl" style="left:150px;width:13px;text-align:right;top:223.52px;font-size:6.0px;color:#5c6370">23</div><div class="cl" style="left:176px;top:223.10px;font-size:6.55px"><span style="color:#8d9199">export</span> <span style="color:#8d9199">function</span> <span style="color:#4fa3e6">PeerStrem</span><span style="color:#d8b255">(</span><span style="color:#d8b255">{</span> <span style="color:#e0755a">room</span><span style="color:#a9aeb7">,</span> <span style="color:#e0755a">Id</span> <span style="color:#d8b255">}</span><span style="color:#a9aeb7">:</span> <span style="color:#d8b255">{</span> <span style="color:#c6c9ce">room</span><span style="color:#a9aeb7">:</span> <span style="color:#e0755a">Room</span><span style="color:#a9aeb7">,</span> <span style="color:#c6c9ce">Id</span><span style="color:#a9aeb7">:</span> <span style="color:#4fa3e6">string</span><span style="color:#d8b255">}</span><span style="color:#d8b255">)</span> <span style="color:#d8b255">{</span></div><div class="cl" style="left:150px;width:13px;text-align:right;top:232.50px;font-size:6.0px;color:#5c6370">24</div><div class="cl" style="left:176px;top:232.08px;font-size:6.55px">  <span style="color:#bfc2c8">const</span> <span style="color:#e0755a">session</span> <span style="color:#a9aeb7">=</span> <span style="color:#4fa3e6">useSession</span><span style="color:#d8b255">(</span><span style="color:#d8b255">)</span><span style="color:#a9aeb7">;</span></div><div class="cl" style="left:150px;width:13px;text-align:right;top:241.48px;font-size:6.0px;color:#5c6370">25</div><div class="cl" style="left:176px;top:241.06px;font-size:6.55px">  <span style="color:#bfc2c8">const</span> <span style="color:#d8b255">[</span><span style="color:#e0755a">client</span><span style="color:#a9aeb7">,</span> <span style="color:#e0755a">setClient</span><span style="color:#d8b255">]</span> <span style="color:#a9aeb7">=</span> <span style="color:#4fa3e6">useState</span><span style="color:#a9aeb7">&lt;</span><span style="color:#e0755a">StreamVideoClient</span> <span style="color:#a9aeb7">|</span> <span style="color:#d19a66">null</span><span style="color:#a9aeb7">&gt;</span><span style="color:#d8b255">(</span><span style="color:#d19a66">null</span><span style="color:#d8b255">)</span><span style="color:#a9aeb7">;</span></div><div class="cl" style="left:150px;width:13px;text-align:right;top:250.46px;font-size:6.0px;color:#5c6370">26</div><div class="cl" style="left:176px;top:250.04px;font-size:6.55px">  <span style="color:#bfc2c8">const</span> <span style="color:#d8b255">[</span><span style="color:#e0755a">call</span><span style="color:#a9aeb7">,</span> <span style="color:#e0755a">setCall</span><span style="color:#d8b255">]</span> <span style="color:#a9aeb7">=</span> <span style="color:#4fa3e6">useState</span><span style="color:#a9aeb7">&lt;</span><span style="color:#e0755a">Call</span> <span style="color:#a9aeb7">|</span> <span style="color:#d19a66">null</span><span style="color:#a9aeb7">&gt;</span><span style="color:#d8b255">(</span><span style="color:#d19a66">null</span><span style="color:#d8b255">)</span><span style="color:#a9aeb7">;</span></div><div class="cl" style="left:150px;width:13px;text-align:right;top:259.44px;font-size:6.0px;color:#5c6370">27</div><div class="cl" style="left:176px;top:259.02px;font-size:6.55px">  <span style="color:#bfc2c8">const</span> <span style="color:#e0755a">router</span> <span style="color:#a9aeb7">=</span> <span style="color:#4fa3e6">useRouter</span><span style="color:#d8b255">(</span><span style="color:#d8b255">)</span><span style="color:#a9aeb7">;</span></div><div class="cl" style="left:150px;width:13px;text-align:right;top:268.42px;font-size:6.0px;color:#5c6370">28</div><div class="cl" style="left:150px;width:13px;text-align:right;top:277.40px;font-size:6.0px;color:#5c6370">29</div><div class="cl" style="left:176px;top:276.98px;font-size:6.55px">  <span style="color:#4fa3e6">useEffect</span><span style="color:#d8b255">(</span><span style="color:#d8b255">(</span><span style="color:#d8b255">)</span> <span style="color:#a9aeb7">=</span><span style="color:#a9aeb7">&gt;</span> <span style="color:#d8b255">{</span></div><div class="cl" style="left:150px;width:13px;text-align:right;top:286.38px;font-size:6.0px;color:#5c6370">30</div><div class="cl" style="left:176px;top:285.96px;font-size:6.55px">    <span style="color:#bfc2c8">if</span> <span style="color:#d8b255">(</span><span style="color:#a9aeb7">!</span><span style="color:#e0755a">room</span><span style="color:#d8b255">)</span> <span style="color:#bfc2c8">return</span><span style="color:#a9aeb7">;</span></div><div class="cl" style="left:150px;width:13px;text-align:right;top:295.36px;font-size:6.0px;color:#5c6370">31</div><div class="cl" style="left:176px;top:294.94px;font-size:6.55px">    <span style="color:#bfc2c8">if</span> <span style="color:#d8b255">(</span><span style="color:#a9aeb7">!</span><span style="color:#e0755a">session</span><span style="color:#a9aeb7">.</span><span style="color:#e0755a">data</span><span style="color:#a9aeb7">?</span><span style="color:#a9aeb7">.</span><span style="color:#e0755a">user</span><span style="color:#d8b255">)</span> <span style="color:#d8b255">{</span></div><div class="cl" style="left:150px;width:13px;text-align:right;top:304.34px;font-size:6.0px;color:#5c6370">32</div><div class="cl" style="left:176px;top:303.92px;font-size:6.55px">      <span style="color:#bfc2c8">return</span><span style="color:#a9aeb7">;</span></div><div class="cl" style="left:150px;width:13px;text-align:right;top:313.32px;font-size:6.0px;color:#5c6370">33</div><div class="cl" style="left:176px;top:312.90px;font-size:6.55px">    <span style="color:#d8b255">}</span></div><div class="cl" style="left:150px;width:13px;text-align:right;top:322.30px;font-size:6.0px;color:#5c6370">34</div><div class="cl" style="left:176px;top:321.88px;font-size:6.55px">    <span style="color:#bfc2c8">const</span> <span style="color:#e0755a">userId</span> <span style="color:#a9aeb7">=</span> <span style="color:#e0755a">Id</span><span style="color:#a9aeb7">;</span></div><div class="cl" style="left:150px;width:13px;text-align:right;top:331.28px;font-size:6.0px;color:#5c6370">35</div><div class="cl" style="left:176px;top:330.86px;font-size:6.55px">    <span style="color:#bfc2c8">const</span> <span style="color:#e0755a">client</span> <span style="color:#a9aeb7">=</span> <span style="color:#bfc2c8">new</span> <span style="color:#4fa3e6">StreamVideoClient</span><span style="color:#d8b255">(</span><span style="color:#d8b255">{</span></div><div class="cl" style="left:150px;width:13px;text-align:right;top:340.26px;font-size:6.0px;color:#5c6370">36</div><div class="cl" style="left:176px;top:339.84px;font-size:6.55px">      <span style="color:#e0755a">apiKey</span><span style="color:#a9aeb7">,</span></div><div class="cl" style="left:150px;width:13px;text-align:right;top:349.24px;font-size:6.0px;color:#5c6370">37</div><div class="cl" style="left:176px;top:348.82px;font-size:6.55px">      <span style="color:#c6c9ce">user</span><span style="color:#a9aeb7">:</span> <span style="color:#d8b255">{</span></div><div class="cl" style="left:150px;width:13px;text-align:right;top:358.22px;font-size:6.0px;color:#5c6370">38</div><div class="cl" style="left:176px;top:357.80px;font-size:6.55px">        <span style="color:#c6c9ce">id</span><span style="color:#a9aeb7">:</span> <span style="color:#e0755a">userId</span><span style="color:#a9aeb7">,</span></div><div class="cl" style="left:150px;width:13px;text-align:right;top:367.20px;font-size:6.0px;color:#5c6370">39</div><div class="cl" style="left:176px;top:366.78px;font-size:6.55px">        <span style="color:#c6c9ce">name</span><span style="color:#a9aeb7">:</span> <span style="color:#e0755a">session</span><span style="color:#a9aeb7">.</span><span style="color:#e0755a">data</span><span style="color:#a9aeb7">.</span><span style="color:#e0755a">user</span><span style="color:#a9aeb7">.</span><span style="color:#e0755a">name</span> <span style="color:#a9aeb7">?</span><span style="color:#a9aeb7">?</span> <span style="color:#d19a66">undefined</span><span style="color:#a9aeb7">,</span></div><div class="cl" style="left:150px;width:13px;text-align:right;top:376.18px;font-size:6.0px;color:#5c6370">40</div><div class="cl" style="left:176px;top:375.76px;font-size:6.55px">        <span style="color:#c6c9ce">image</span><span style="color:#a9aeb7">:</span> <span style="color:#e0755a">session</span><span style="color:#a9aeb7">.</span><span style="color:#e0755a">data</span><span style="color:#a9aeb7">.</span><span style="color:#e0755a">user</span><span style="color:#a9aeb7">.</span><span style="color:#e0755a">image</span> <span style="color:#a9aeb7">?</span><span style="color:#a9aeb7">?</span> <span style="color:#d19a66">undefined</span><span style="color:#a9aeb7">,</span></div><div class="cl" style="left:150px;width:13px;text-align:right;top:385.16px;font-size:6.0px;color:#5c6370">41</div><div class="cl" style="left:176px;top:384.74px;font-size:6.55px">      <span style="color:#d8b255">}</span><span style="color:#a9aeb7">,</span></div><div class="cl" style="left:150px;width:13px;text-align:right;top:394.14px;font-size:6.0px;color:#5c6370">42</div><div class="cl" style="left:176px;top:393.72px;font-size:6.55px">      <span style="color:#4fa3e6">tokenProvider</span><span style="color:#a9aeb7">:</span> <span style="color:#d8b255">(</span><span style="color:#d8b255">)</span> <span style="color:#a9aeb7">=</span><span style="color:#a9aeb7">&gt;</span> <span style="color:#4fa3e6">generateTokenAction</span><span style="color:#d8b255">(</span><span style="color:#e0755a">Id</span><span style="color:#d8b255">)</span><span style="color:#a9aeb7">,</span></div><div class="cl" style="left:150px;width:13px;text-align:right;top:403.12px;font-size:6.0px;color:#5c6370">43</div><div class="cl" style="left:176px;top:402.70px;font-size:6.55px">    <span style="color:#d8b255">}</span><span style="color:#d8b255">)</span><span style="color:#a9aeb7">;</span></div><div class="cl" style="left:150px;width:13px;text-align:right;top:412.10px;font-size:6.0px;color:#5c6370">44</div><div class="cl" style="left:176px;top:411.68px;font-size:6.55px">    <span style="color:#bfc2c8">const</span> <span style="color:#e0755a">call</span> <span style="color:#a9aeb7">=</span> <span style="color:#e0755a">client</span><span style="color:#a9aeb7">.</span><span style="color:#4fa3e6">call</span><span style="color:#d8b255">(</span><span style="color:#8e9096">&quot;default&quot;</span><span style="color:#a9aeb7">,</span> <span style="color:#e0755a">room</span><span style="color:#a9aeb7">.</span><span style="color:#e0755a">id</span><span style="color:#d8b255">)</span><span style="color:#a9aeb7">;</span></div><div class="cl" style="left:150px;width:13px;text-align:right;top:421.08px;font-size:6.0px;color:#5c6370">45</div><div class="cl" style="left:176px;top:420.66px;font-size:6.55px">    <span style="color:#e0755a">call</span><span style="color:#a9aeb7">.</span><span style="color:#4fa3e6">join</span><span style="color:#d8b255">(</span><span style="color:#d8b255">{</span> <span style="color:#c6c9ce">create</span><span style="color:#a9aeb7">:</span> <span style="color:#d19a66">true</span> <span style="color:#d8b255">}</span><span style="color:#d8b255">)</span><span style="color:#a9aeb7">;</span></div><div class="cl" style="left:150px;width:13px;text-align:right;top:430.06px;font-size:6.0px;color:#5c6370">46</div><div class="cl" style="left:176px;top:429.64px;font-size:6.55px">    <span style="color:#4fa3e6">setClient</span><span style="color:#d8b255">(</span><span style="color:#e0755a">client</span><span style="color:#d8b255">)</span><span style="color:#a9aeb7">;</span></div><div class="cl" style="left:150px;width:13px;text-align:right;top:439.04px;font-size:6.0px;color:#5c6370">47</div><div class="cl" style="left:176px;top:438.62px;font-size:6.55px">    <span style="color:#4fa3e6">setCall</span><span style="color:#d8b255">(</span><span style="color:#e0755a">call</span><span style="color:#d8b255">)</span><span style="color:#a9aeb7">;</span></div><div class="cl" style="left:150px;width:13px;text-align:right;top:448.02px;font-size:6.0px;color:#5c6370">48</div><div class="abs" style="left:175.8px;top:67.8px;width:0.6px;height:71.9px;background:#383d46;"></div><div class="abs" style="left:175.8px;top:229.4px;width:0.6px;height:215.5px;background:#383d46;"></div><div class="abs" style="left:183.6px;top:283.3px;width:0.6px;height:161.7px;background:#383d46;"></div><div class="abs" style="left:191.5px;top:301.2px;width:0.6px;height:9.0px;background:#383d46;"></div><div class="abs" style="left:191.5px;top:337.2px;width:0.6px;height:62.9px;background:#383d46;"></div><div class="abs" style="left:199.4px;top:355.1px;width:0.6px;height:27.0px;background:#383d46;"></div><div class="abs" style="left:174px;top:185.0px;width:5px;height:5px;border-radius:50%;background:#e8c14a"></div><div class="abs" style="left:705.0px;top:52.0px;width:16.0px;height:0.6px;background:#7a7f88;opacity:0.4"></div><div class="abs" style="left:705.0px;top:53.3px;width:3.4px;height:0.6px;background:#7a7f88;opacity:0.4"></div><div class="abs" style="left:705.9px;top:54.7px;width:2.1px;height:0.6px;background:#5b86b8;opacity:0.4"></div><div class="abs" style="left:705.9px;top:56.1px;width:5.5px;height:0.6px;background:#9b6f50;opacity:0.4"></div><div class="abs" style="left:705.9px;top:57.4px;width:8.8px;height:0.6px;background:#8a6a5a;opacity:0.4"></div><div class="abs" style="left:705.9px;top:58.8px;width:5.9px;height:0.6px;background:#8a6a5a;opacity:0.4"></div><div class="abs" style="left:705.9px;top:60.1px;width:4.6px;height:0.6px;background:#9b6f50;opacity:0.4"></div><div class="abs" style="left:705.9px;top:61.4px;width:5.0px;height:0.6px;background:#5b86b8;opacity:0.4"></div><div class="abs" style="left:705.9px;top:62.8px;width:5.0px;height:0.6px;background:#7a7f88;opacity:0.4"></div><div class="abs" style="left:705.9px;top:64.2px;width:7.6px;height:0.6px;background:#7a7f88;opacity:0.4"></div><div class="abs" style="left:705.0px;top:65.5px;width:15.1px;height:0.6px;background:#9b6f50;opacity:0.4"></div><div class="abs" style="left:705.0px;top:66.8px;width:18.9px;height:0.6px;background:#9b6f50;opacity:0.4"></div><div class="abs" style="left:705.0px;top:68.2px;width:20.6px;height:0.6px;background:#9b6f50;opacity:0.4"></div><div class="abs" style="left:705.0px;top:69.6px;width:28.1px;height:0.6px;background:#7a7f88;opacity:0.4"></div><div class="abs" style="left:705.0px;top:70.9px;width:18.5px;height:0.6px;background:#7a7f88;opacity:0.4"></div><div class="abs" style="left:705.0px;top:72.2px;width:22.7px;height:0.6px;background:#7a7f88;opacity:0.4"></div><div class="abs" style="left:705.0px;top:74.9px;width:25.2px;height:0.6px;background:#9b6f50;opacity:0.4"></div><div class="abs" style="left:705.0px;top:77.7px;width:28.6px;height:0.6px;background:#8a6a5a;opacity:0.4"></div><div class="abs" style="left:705.9px;top:79.0px;width:12.2px;height:0.6px;background:#8a6a5a;opacity:0.4"></div><div class="abs" style="left:705.9px;top:80.3px;width:29.0px;height:0.6px;background:#7a7f88;opacity:0.4"></div><div class="abs" style="left:705.9px;top:81.7px;width:21.8px;height:0.6px;background:#8a6a5a;opacity:0.4"></div><div class="abs" style="left:705.9px;top:83.1px;width:11.3px;height:0.6px;background:#5b86b8;opacity:0.4"></div><div class="abs" style="left:705.9px;top:85.8px;width:7.1px;height:0.6px;background:#8a6a5a;opacity:0.4"></div><div class="abs" style="left:706.8px;top:87.1px;width:7.6px;height:0.6px;background:#5b86b8;opacity:0.4"></div><div class="abs" style="left:706.8px;top:88.4px;width:10.9px;height:0.6px;background:#9b6f50;opacity:0.4"></div><div class="abs" style="left:707.7px;top:89.8px;width:2.9px;height:0.6px;background:#9b6f50;opacity:0.4"></div><div class="abs" style="left:706.8px;top:91.2px;width:0.4px;height:0.6px;background:#9b6f50;opacity:0.4"></div><div class="abs" style="left:706.8px;top:92.5px;width:7.6px;height:0.6px;background:#9b6f50;opacity:0.4"></div><div class="abs" style="left:706.8px;top:93.8px;width:16.0px;height:0.6px;background:#9b6f50;opacity:0.4"></div><div class="abs" style="left:707.7px;top:95.2px;width:2.9px;height:0.6px;background:#7a7f88;opacity:0.4"></div><div class="abs" style="left:707.7px;top:96.6px;width:2.9px;height:0.6px;background:#5b86b8;opacity:0.4"></div><div class="abs" style="left:708.6px;top:97.9px;width:4.6px;height:0.6px;background:#8a6a5a;opacity:0.4"></div><div class="abs" style="left:708.6px;top:99.2px;width:17.6px;height:0.6px;background:#8a6a5a;opacity:0.4"></div><div class="abs" style="left:708.6px;top:100.6px;width:18.5px;height:0.6px;background:#7a7f88;opacity:0.4"></div><div class="abs" style="left:707.7px;top:101.9px;width:0.8px;height:0.6px;background:#9b6f50;opacity:0.4"></div><div class="abs" style="left:707.7px;top:103.3px;width:18.9px;height:0.6px;background:#7a7f88;opacity:0.4"></div><div class="abs" style="left:706.8px;top:104.7px;width:1.3px;height:0.6px;background:#5b86b8;opacity:0.4"></div><div class="abs" style="left:706.8px;top:106.0px;width:18.9px;height:0.6px;background:#9b6f50;opacity:0.4"></div><div class="abs" style="left:706.8px;top:107.3px;width:11.8px;height:0.6px;background:#5b86b8;opacity:0.4"></div><div class="abs" style="left:706.8px;top:108.7px;width:7.6px;height:0.6px;background:#9b6f50;opacity:0.4"></div><div class="abs" style="left:706.8px;top:110.1px;width:5.9px;height:0.6px;background:#9b6f50;opacity:0.4"></div><div class="abs" style="left:750.0px;top:51.3px;width:1.0px;height:398.2px;background:#3b4048;"></div><div class="abs" style="left:750.0px;top:112.5px;width:6.0px;height:1.0px;background:#3e7fd1;"></div><div class="abs" style="left:0.0px;top:449.5px;width:756.0px;height:10.5px;background:#21252b;"></div><div class="t" style="left:502.30px;top:453.26px;font-size:5.6px;color:#9da5b4;font-weight:normal;font-family:"Liberation Sans",sans-serif;">Ln 20, Col 1</div><div class="t" style="left:539.50px;top:453.26px;font-size:5.6px;color:#9da5b4;font-weight:normal;font-family:"Liberation Sans",sans-serif;">Spaces: 2</div><div class="t" style="left:570.50px;top:453.26px;font-size:5.6px;color:#9da5b4;font-weight:normal;font-family:"Liberation Sans",sans-serif;">UTF-8</div><div class="t" style="left:593.60px;top:453.26px;font-size:5.6px;color:#9da5b4;font-weight:normal;font-family:"Liberation Sans",sans-serif;">LF</div><div class="t" style="left:607.80px;top:453.26px;font-size:5.6px;color:#9da5b4;font-weight:normal;font-family:"Liberation Sans",sans-serif;">{} TypeScript JSX</div><div class="t" style="left:660.70px;top:453.26px;font-size:5.6px;color:#9da5b4;font-weight:normal;font-family:"Liberation Sans",sans-serif;">&#8859; Go Live</div><div class="t" style="left:694.00px;top:453.26px;font-size:5.6px;color:#9da5b4;font-weight:normal;font-family:"Liberation Sans",sans-serif;">&#9635;</div><div class="t" style="left:707.90px;top:453.26px;font-size:5.6px;color:#9da5b4;font-weight:normal;font-family:"Liberation Sans",sans-serif;">&#10003; Prettier</div><div class="t" style="left:741.00px;top:452.92px;font-size:6px;color:#9da5b4;font-weight:normal;font-family:"Liberation Sans",sans-serif;">&#9826;</div></div><div class="abs" style="left:14.0px;top:14.3px;width:31.0px;height:31.0px;background:#19222d;border-radius:50%"></div><div class="abs" style="left:21.5px;top:28.0px;width:3.8px;height:3.8px;background:#f2f2f2;border-radius:50%"></div><div class="abs" style="left:27.1px;top:28.0px;width:3.8px;height:3.8px;background:#f2f2f2;border-radius:50%"></div><div class="abs" style="left:32.7px;top:28.0px;width:3.8px;height:3.8px;background:#f2f2f2;border-radius:50%"></div><div class="abs" style="left:0.0px;top:431.0px;width:143.0px;height:29.0px;background:#111214;border-top-right-radius:8px"></div></div><div class="t" style="left:323.00px;top:586.14px;font-size:14.6px;color:#f2f2f2;font-weight:normal;font-family:"Liberation Sans",sans-serif;">Aniket Ghosh</div><svg class="abs" style="left:419.7px;top:585.5px" width="15.6" height="15.6" viewBox="0 0 24 24"><path fill="#f2f2f2" d="M21 6.5l-4 4V7c0-.55-.45-1-1-1H9.82L21 17.18V6.5zM3.27 2L2 3.27 4.73 6H4c-.55 0-1 .45-1 1v10c0 .55.45 1 1 1h12c.21 0 .39-.08.54-.18L19.73 21 21 19.73 3.27 2z"/></svg><svg class="abs" style="left:442.8px;top:586px" width="12" height="13" viewBox="0 0 12 13"><rect x="0" y="4" width="2.8" height="5" rx="1.3" fill="#005fff"/><rect x="4.5" y="0" width="2.6" height="13" rx="1.3" fill="#005fff"/><rect x="8.5" y="4" width="2.8" height="5" rx="1.3" fill="#005fff"/></svg><div class="abs" style="left:1110px;top:581px;width:25px;height:26px;background:#12161c;border-top-left-radius:10px;border-bottom-right-radius:12px"></div><svg class="abs" style="left:1118px;top:590.5px" width="10" height="8" viewBox="0 0 10 8"><rect x="0" y="5.5" width="1.7" height="2.5" fill="#20c1b0"/><rect x="3.5" y="3" width="1.7" height="5" fill="#20c1b0"/><rect x="7" y="0.3" width="1.7" height="7.7" fill="#20c1b0"/></svg><div class="abs" style="left:449px;top:626px;width:274px;height:156px;border:2px solid #005fff;border-radius:12px;background:#1e293b;overflow:hidden"><div class="abs" style="left:14px;top:15px;width:30px;height:30px;border-radius:50%;background:#1d2839"></div><div class="abs" style="left:21.9px;top:28.9px;width:3.2px;height:3.2px;border-radius:50%;background:#8a8f98"></div><div class="abs" style="left:27.4px;top:28.9px;width:3.2px;height:3.2px;border-radius:50%;background:#8a8f98"></div><div class="abs" style="left:32.9px;top:28.9px;width:3.2px;height:3.2px;border-radius:50%;background:#8a8f98"></div><div class="abs" style="left:0;top:123px;width:143px;height:31px;background:#111214;border-top-right-radius:8px"></div><div class="abs" style="left:246px;top:128px;width:26px;height:26px;background:#101214;border-top-left-radius:10px"></div></div><div class="abs" style="left:729px;top:626px;width:274px;height:156px;border:2px solid #005fff;border-radius:12px;background:#1e293b;overflow:hidden"><div class="abs" style="left:14px;top:15px;width:30px;height:30px;border-radius:50%;background:#1d2839"></div><div class="abs" style="left:21.9px;top:28.9px;width:3.2px;height:3.2px;border-radius:50%;background:#8a8f98"></div><div class="abs" style="left:27.4px;top:28.9px;width:3.2px;height:3.2px;border-radius:50%;background:#8a8f98"></div><div class="abs" style="left:32.9px;top:28.9px;width:3.2px;height:3.2px;border-radius:50%;background:#8a8f98"></div><div class="abs" style="left:0;top:123px;width:94px;height:31px;background:#111214;border-top-right-radius:8px"></div><div class="abs" style="left:246px;top:128px;width:26px;height:26px;background:#101214;border-top-left-radius:10px"></div></div><div class="t" style="left:456.50px;top:758.84px;font-size:14.6px;color:#f2f2f2;font-weight:normal;font-family:"Liberation Sans",sans-serif;">Aniket Ghosh</div><svg class="abs" style="left:553.7px;top:758.5px" width="15.6" height="15.6" viewBox="0 0 24 24"><path fill="#f2f2f2" d="M21 6.5l-4 4V7c0-.55-.45-1-1-1H9.82L21 17.18V6.5zM3.27 2L2 3.27 4.73 6H4c-.55 0-1 .45-1 1v10c0 .55.45 1 1 1h12c.21 0 .39-.08.54-.18L19.73 21 21 19.73 3.27 2z"/></svg><svg class="abs" style="left:576.5px;top:759px" width="12" height="13" viewBox="0 0 12 13"><rect x="0" y="4" width="2.8" height="5" rx="1.3" fill="#005fff"/><rect x="4.5" y="0" width="2.6" height="13" rx="1.3" fill="#005fff"/><rect x="8.5" y="4" width="2.8" height="5" rx="1.3" fill="#005fff"/></svg><svg class="abs" style="left:703.5px;top:766.5px" width="10" height="8" viewBox="0 0 10 8"><rect x="0" y="5.5" width="1.7" height="2.5" fill="#20c1b0"/><rect x="3.5" y="3" width="1.7" height="5" fill="#20c1b0"/><rect x="7" y="0.3" width="1.7" height="7.7" fill="#20c1b0"/></svg><div class="t" style="left:736.00px;top:758.84px;font-size:14.6px;color:#f2f2f2;font-weight:normal;font-family:"Liberation Sans",sans-serif;">aniket</div><svg class="abs" style="left:784.5px;top:758.5px" width="15.6" height="15.6" viewBox="0 0 24 24"><path fill="#f2f2f2" d="M21 6.5l-4 4V7c0-.55-.45-1-1-1H9.82L21 17.18V6.5zM3.27 2L2 3.27 4.73 6H4c-.55 0-1 .45-1 1v10c0 .55.45 1 1 1h12c.21 0 .39-.08.54-.18L19.73 21 21 19.73 3.27 2z"/></svg><svg class="abs" style="left:807px;top:759px" width="12" height="13" viewBox="0 0 12 13"><rect x="0" y="4" width="2.8" height="5" rx="1.3" fill="#005fff"/><rect x="4.5" y="0" width="2.6" height="13" rx="1.3" fill="#005fff"/><rect x="8.5" y="4" width="2.8" height="5" rx="1.3" fill="#005fff"/></svg><svg class="abs" style="left:983.5px;top:766.5px" width="10" height="8" viewBox="0 0 10 8"><rect x="0" y="5.5" width="1.7" height="2.5" fill="#20c1b0"/><rect x="3.5" y="3" width="1.7" height="5" fill="#20c1b0"/><rect x="7" y="0.3" width="1.7" height="7.7" fill="#20c1b0"/></svg><div class="abs" style="left:816px;top:654px;width:100px;height:100px;border-radius:50%;background:#0a97a6"></div><div class="t" style="left:851.50px;top:677.87px;font-size:48px;color:#ffffff;font-weight:normal;font-family:"Liberation Sans",sans-serif;">a</div><svg class="abs" style="left:536.7px;top:654.2px" width="99" height="99" viewBox="0 0 100 100"><defs><clipPath id="cc"><circle cx="50" cy="50" r="49.5"/></clipPath></defs>
<g clip-path="url(#cc)">
<rect width="100" height="100" fill="#5ec5ea"/>
<path d="M62 8 Q85 15 95 40 L80 42 Q70 30 58 22Z" fill="#2a8ad2" opacity="0.75"/>
<path d="M60 60 Q75 70 88 92 L76 96 Q66 80 55 66Z" fill="#2f93d8" opacity="0.5"/>
<path d="M8 40 Q20 42 30 48 L10 52Z" fill="#2a8ad2" opacity="0.5"/>
<line x1="19.6" y1="59.4" x2="0.2" y2="66.7" stroke="#1f7fc8" stroke-width="3.2" opacity="0.57" stroke-linecap="round"/><line x1="16.2" y1="47.5" x2="-1.2" y2="60.9" stroke="#1f7fc8" stroke-width="1.6" opacity="0.54" stroke-linecap="round"/><line x1="63.1" y1="16.7" x2="77.1" y2="18.6" stroke="#1f7fc8" stroke-width="2.4" opacity="0.75" stroke-linecap="round"/><line x1="58.3" y1="35.3" x2="65.8" y2="34.0" stroke="#2a8fd6" stroke-width="3.2" opacity="0.81" stroke-linecap="round"/><line x1="34.9" y1="79.0" x2="38.1" y2="89.3" stroke="#8fd8f2" stroke-width="1.6" opacity="0.50" stroke-linecap="round"/><line x1="79.8" y1="67.6" x2="89.2" y2="75.1" stroke="#3aa2e0" stroke-width="0.8" opacity="0.63" stroke-linecap="round"/><line x1="53.0" y1="73.5" x2="48.2" y2="79.8" stroke="#2a8fd6" stroke-width="2.4" opacity="0.84" stroke-linecap="round"/><line x1="16.9" y1="78.6" x2="19.3" y2="105.2" stroke="#2a8fd6" stroke-width="1.2" opacity="0.69" stroke-linecap="round"/><line x1="76.7" y1="46.7" x2="83.1" y2="48.9" stroke="#3aa2e0" stroke-width="1.6" opacity="0.53" stroke-linecap="round"/><line x1="28.2" y1="88.1" x2="34.6" y2="109.9" stroke="#2a8fd6" stroke-width="1.2" opacity="0.50" stroke-linecap="round"/><line x1="21.1" y1="56.5" x2="8.2" y2="69.6" stroke="#1f7fc8" stroke-width="3.2" opacity="0.89" stroke-linecap="round"/><line x1="53.4" y1="22.6" x2="51.9" y2="10.9" stroke="#2a8fd6" stroke-width="1.2" opacity="0.61" stroke-linecap="round"/><line x1="88.5" y1="42.9" x2="99.1" y2="54.3" stroke="#1f7fc8" stroke-width="1.2" opacity="0.66" stroke-linecap="round"/><line x1="70.9" y1="22.9" x2="84.4" y2="27.8" stroke="#8fd8f2" stroke-width="1.2" opacity="0.60" stroke-linecap="round"/><line x1="53.5" y1="25.4" x2="44.6" y2="15.5" stroke="#1f7fc8" stroke-width="0.8" opacity="0.73" stroke-linecap="round"/><line x1="51.4" y1="83.0" x2="53.4" y2="94.2" stroke="#8fd8f2" stroke-width="3.2" opacity="0.83" stroke-linecap="round"/><line x1="67.5" y1="70.0" x2="81.7" y2="77.9" stroke="#1f7fc8" stroke-width="1.2" opacity="0.79" stroke-linecap="round"/><line x1="68.4" y1="78.4" x2="70.7" y2="93.6" stroke="#8fd8f2" stroke-width="2.4" opacity="0.74" stroke-linecap="round"/><line x1="34.0" y1="58.6" x2="26.6" y2="54.0" stroke="#8fd8f2" stroke-width="1.2" opacity="0.60" stroke-linecap="round"/><line x1="64.7" y1="20.6" x2="60.0" y2="8.3" stroke="#1f7fc8" stroke-width="0.8" opacity="0.59" stroke-linecap="round"/><line x1="12.2" y1="35.2" x2="-4.7" y2="37.8" stroke="#2a8fd6" stroke-width="1.2" opacity="0.53" stroke-linecap="round"/><line x1="30.9" y1="61.9" x2="28.5" y2="68.4" stroke="#1f7fc8" stroke-width="3.2" opacity="0.54" stroke-linecap="round"/><line x1="68.4" y1="71.8" x2="70.1" y2="83.6" stroke="#1f7fc8" stroke-width="3.2" opacity="0.74" stroke-linecap="round"/><line x1="75.9" y1="36.5" x2="83.0" y2="26.8" stroke="#2a8fd6" stroke-width="0.8" opacity="0.74" stroke-linecap="round"/><line x1="65.2" y1="57.7" x2="76.7" y2="55.8" stroke="#2a8fd6" stroke-width="0.8" opacity="0.68" stroke-linecap="round"/><line x1="39.0" y1="62.1" x2="20.7" y2="73.0" stroke="#3aa2e0" stroke-width="1.2" opacity="0.64" stroke-linecap="round"/><line x1="33.3" y1="11.4" x2="22.2" y2="-5.3" stroke="#8fd8f2" stroke-width="0.8" opacity="0.73" stroke-linecap="round"/><line x1="31.3" y1="31.3" x2="23.0" y2="18.6" stroke="#2a8fd6" stroke-width="0.8" opacity="0.76" stroke-linecap="round"/><line x1="91.4" y1="48.3" x2="108.4" y2="43.0" stroke="#8fd8f2" stroke-width="3.2" opacity="0.68" stroke-linecap="round"/><line x1="59.2" y1="35.1" x2="57.9" y2="15.6" stroke="#2a8fd6" stroke-width="3.2" opacity="0.69" stroke-linecap="round"/><line x1="54.5" y1="85.7" x2="52.2" y2="99.4" stroke="#3aa2e0" stroke-width="2.4" opacity="0.86" stroke-linecap="round"/><line x1="37.0" y1="64.2" x2="26.2" y2="75.3" stroke="#8fd8f2" stroke-width="1.6" opacity="0.70" stroke-linecap="round"/><line x1="51.5" y1="77.1" x2="48.5" y2="86.4" stroke="#1f7fc8" stroke-width="1.2" opacity="0.65" stroke-linecap="round"/><line x1="28.8" y1="37.8" x2="22.4" y2="34.2" stroke="#2a8fd6" stroke-width="0.8" opacity="0.88" stroke-linecap="round"/><line x1="46.6" y1="69.8" x2="49.6" y2="82.7" stroke="#8fd8f2" stroke-width="1.2" opacity="0.65" stroke-linecap="round"/><line x1="15.1" y1="45.6" x2="1.1" y2="31.3" stroke="#8fd8f2" stroke-width="3.2" opacity="0.63" stroke-linecap="round"/><line x1="61.1" y1="29.5" x2="72.5" y2="18.5" stroke="#3aa2e0" stroke-width="1.6" opacity="0.62" stroke-linecap="round"/><line x1="54.0" y1="35.0" x2="55.2" y2="27.7" stroke="#3aa2e0" stroke-width="0.8" opacity="0.59" stroke-linecap="round"/><line x1="60.4" y1="62.7" x2="71.2" y2="74.1" stroke="#3aa2e0" stroke-width="3.2" opacity="0.88" stroke-linecap="round"/><line x1="41.6" y1="30.8" x2="29.8" y2="22.6" stroke="#8fd8f2" stroke-width="0.8" opacity="0.71" stroke-linecap="round"/><line x1="71.2" y1="54.9" x2="88.7" y2="60.1" stroke="#1f7fc8" stroke-width="3.2" opacity="0.66" stroke-linecap="round"/><line x1="61.0" y1="9.3" x2="76.1" y2="8.9" stroke="#1f7fc8" stroke-width="2.4" opacity="0.68" stroke-linecap="round"/><line x1="63.6" y1="89.3" x2="63.8" y2="94.7" stroke="#3aa2e0" stroke-width="3.2" opacity="0.69" stroke-linecap="round"/><line x1="37.7" y1="32.8" x2="35.1" y2="14.6" stroke="#1f7fc8" stroke-width="0.8" opacity="0.60" stroke-linecap="round"/><line x1="36.4" y1="61.2" x2="23.8" y2="59.7" stroke="#3aa2e0" stroke-width="1.6" opacity="0.86" stroke-linecap="round"/><line x1="65.7" y1="30.0" x2="68.6" y2="24.1" stroke="#8fd8f2" stroke-width="3.2" opacity="0.81" stroke-linecap="round"/><line x1="34.2" y1="51.2" x2="17.9" y2="63.0" stroke="#1f7fc8" stroke-width="0.8" opacity="0.71" stroke-linecap="round"/><line x1="33.5" y1="10.8" x2="47.3" y2="-5.4" stroke="#8fd8f2" stroke-width="3.2" opacity="0.88" stroke-linecap="round"/><line x1="6.6" y1="52.0" x2="1.5" y2="61.9" stroke="#3aa2e0" stroke-width="3.2" opacity="0.83" stroke-linecap="round"/><line x1="31.5" y1="42.5" x2="23.6" y2="29.0" stroke="#3aa2e0" stroke-width="1.6" opacity="0.77" stroke-linecap="round"/><line x1="89.5" y1="38.5" x2="101.5" y2="26.9" stroke="#3aa2e0" stroke-width="1.2" opacity="0.73" stroke-linecap="round"/><line x1="59.4" y1="79.6" x2="60.4" y2="93.4" stroke="#2a8fd6" stroke-width="0.8" opacity="0.71" stroke-linecap="round"/><line x1="18.3" y1="72.8" x2="6.7" y2="81.6" stroke="#2a8fd6" stroke-width="1.2" opacity="0.87" stroke-linecap="round"/><line x1="8.8" y1="60.9" x2="-8.0" y2="69.6" stroke="#8fd8f2" stroke-width="1.2" opacity="0.70" stroke-linecap="round"/><line x1="27.6" y1="85.5" x2="2.4" y2="91.2" stroke="#3aa2e0" stroke-width="3.2" opacity="0.54" stroke-linecap="round"/><line x1="36.1" y1="57.7" x2="26.4" y2="59.0" stroke="#2a8fd6" stroke-width="0.8" opacity="0.58" stroke-linecap="round"/><line x1="55.1" y1="85.2" x2="61.1" y2="94.7" stroke="#8fd8f2" stroke-width="3.2" opacity="0.54" stroke-linecap="round"/><line x1="47.8" y1="31.5" x2="40.6" y2="19.0" stroke="#8fd8f2" stroke-width="1.2" opacity="0.51" stroke-linecap="round"/><line x1="23.3" y1="20.5" x2="14.1" y2="8.1" stroke="#1f7fc8" stroke-width="3.2" opacity="0.71" stroke-linecap="round"/><line x1="69.8" y1="23.2" x2="73.0" y2="2.3" stroke="#1f7fc8" stroke-width="1.6" opacity="0.63" stroke-linecap="round"/><line x1="33.1" y1="89.2" x2="14.7" y2="87.4" stroke="#1f7fc8" stroke-width="0.8" opacity="0.86" stroke-linecap="round"/><line x1="61.9" y1="63.1" x2="70.6" y2="70.7" stroke="#1f7fc8" stroke-width="2.4" opacity="0.58" stroke-linecap="round"/><line x1="23.0" y1="21.9" x2="20.0" y2="15.6" stroke="#3aa2e0" stroke-width="1.6" opacity="0.55" stroke-linecap="round"/><line x1="12.3" y1="48.7" x2="-0.6" y2="41.5" stroke="#2a8fd6" stroke-width="1.2" opacity="0.69" stroke-linecap="round"/><line x1="87.4" y1="55.8" x2="98.3" y2="72.5" stroke="#1f7fc8" stroke-width="2.4" opacity="0.58" stroke-linecap="round"/><line x1="65.1" y1="63.3" x2="73.5" y2="65.0" stroke="#2a8fd6" stroke-width="0.8" opacity="0.55" stroke-linecap="round"/><line x1="42.7" y1="34.3" x2="38.3" y2="29.1" stroke="#3aa2e0" stroke-width="2.4" opacity="0.67" stroke-linecap="round"/><line x1="37.6" y1="40.9" x2="29.3" y2="25.2" stroke="#8fd8f2" stroke-width="1.2" opacity="0.68" stroke-linecap="round"/><line x1="48.2" y1="22.9" x2="39.5" y2="16.1" stroke="#2a8fd6" stroke-width="3.2" opacity="0.63" stroke-linecap="round"/><line x1="84.7" y1="70.5" x2="91.1" y2="93.9" stroke="#1f7fc8" stroke-width="2.4" opacity="0.70" stroke-linecap="round"/>
<ellipse cx="49.9" cy="26.3" rx="12" ry="11.8" fill="#070707"/>
<ellipse cx="50.4" cy="74.8" rx="12" ry="12.3" fill="#070707"/>
<path d="M16.5 43.2 L84 42.8 Q85.5 50 84.5 57.8 L16 57.3 Q15 50 16.5 43.2Z" fill="#0b0d10"/>
<text x="50" y="52.6" font-family="Liberation Sans" font-size="5.8" font-style="italic" fill="#d8d8d8" text-anchor="middle" letter-spacing="1.5">DIVIDE</text>
</g></svg><div class="abs" style="left:540.0px;top:803.0px;width:38px;height:38px;border-radius:50%;background:#19232d"></div><svg class="abs" style="left:548px;top:811px" width="22" height="22" viewBox="0 0 22 22"><circle cx="11" cy="11" r="8.2" fill="none" stroke="#e6e6e6" stroke-width="1.6"/><circle cx="11" cy="11" r="5.6" fill="#e6e6e6"/></svg><div class="abs" style="left:594.0px;top:803.0px;width:38px;height:38px;border-radius:50%;background:#19232d"></div><svg class="abs" style="left:601px;top:810px" width="24" height="24" viewBox="0 0 24 24">
<circle cx="10.5" cy="13.5" r="8" fill="#e6e6e6"/>
<circle cx="7.8" cy="11.5" r="1.2" fill="#19232d"/><circle cx="13.2" cy="11.5" r="1.2" fill="#19232d"/>
<path d="M6.5 14.5 q4 4.5 8 0 z" fill="#19232d"/>
<path d="M19 1.5 l0.9 2.3 2.3 0.9 -2.3 0.9 -0.9 2.3 -0.9 -2.3 -2.3 -0.9 2.3 -0.9z" fill="#e6e6e6"/>
</svg><div class="abs" style="left:648.0px;top:803.0px;width:38px;height:38px;border-radius:50%;background:#005fff"></div><svg class="abs" style="left:655px;top:810px" width="24" height="24" viewBox="0 0 24 24">
<rect x="3.5" y="5" width="17" height="12" rx="1" fill="none" stroke="#e8eefc" stroke-width="1.6"/>
<rect x="2" y="18.6" width="20" height="1.6" fill="#e8eefc"/>
<path d="M8.5 14 q0.5 -4 5 -4 v-2.3 l3.5 3.3 -3.5 3.3 v-2.3 q-3 0 -5 2z" fill="#e8eefc"/>
</svg><div class="abs" style="left:702px;top:803px;width:70px;height:38px;border-radius:19px;background:#19232d"></div><svg class="abs" style="left:713px;top:811px" width="16" height="22" viewBox="0 0 16 22">
<rect x="5" y="1" width="6" height="12" rx="3" fill="#e6e6e6"/>
<path d="M2.3 10 q0 6 5.7 6 q5.7 0 5.7 -6" fill="none" stroke="#e6e6e6" stroke-width="1.5"/>
<rect x="7.3" y="16" width="1.4" height="4.5" fill="#e6e6e6"/></svg><svg class="abs" style="left:749px;top:819px" width="8" height="5" viewBox="0 0 8 5"><path d="M0 4.5 L4 0.5 L8 4.5Z" fill="#e6e6e6"/></svg><div class="abs" style="left:788px;top:803px;width:70px;height:38px;border-radius:19px;background:#dc433b"></div><svg class="abs" style="left:795px;top:810.5px" width="22.8" height="22.8" viewBox="0 0 24 24"><path fill="#f0e6e6" d="M21 6.5l-4 4V7c0-.55-.45-1-1-1H9.82L21 17.18V6.5zM3.27 2L2 3.27 4.73 6H4c-.55 0-1 .45-1 1v10c0 .55.45 1 1 1h12c.21 0 .39-.08.54-.18L19.73 21 21 19.73 3.27 2z"/></svg><div class="abs" style="left:828.0px;top:811.0px;width:22px;height:22px;border-radius:50%;background:#19232d"></div><svg class="abs" style="left:835px;top:819px" width="8" height="5" viewBox="0 0 8 5"><path d="M0 4.5 L4 0.5 L8 4.5Z" fill="#e6e6e6"/></svg><div class="abs" style="left:874.0px;top:803.5px;width:37px;height:37px;border-radius:50%;background:#dc433b"></div><svg class="abs" style="left:881.5px;top:816px" width="22" height="12" viewBox="0 0 22 12">
<path d="M11 1 C6 1 2.5 2.8 1 4.5 L1.5 8.5 L5.5 8 L6.2 5 C9.2 3.8 12.8 3.8 15.8 5 L16.5 8 L20.5 8.5 L21 4.5 C19.5 2.8 16 1 11 1Z" fill="#f4f4f4"/></svg><div class="t" style="left:314.50px;top:864.65px;font-size:15.3px;color:#f2f2f2;font-weight:normal;font-family:"Liberation Sans",sans-serif;">Participants [2]</div><div class="abs" style="left:1105.8px;top:856.9px;width:31px;height:31px;border-radius:50%;background:#19232d"></div><svg class="abs" style="left:1111px;top:862px" width="20" height="20" viewBox="0 0 20 20"><path d="M6.3 6.3 L13.9 13.9 M13.9 6.3 L6.3 13.9" stroke="#e6e6e6" stroke-width="1.4" fill="none"/></svg><div class="abs" style="left:311px;top:900px;width:830px;height:38px;border-radius:19px;background:#000000"></div><div class="t" style="left:323.50px;top:911.94px;font-size:13.3px;color:#b7bac0;font-weight:normal;font-family:"Liberation Sans",sans-serif;">Search</div><svg class="abs" style="left:1110.5px;top:910px" width="16" height="16" viewBox="0 0 24 24"><path fill="#f0f0f0" d="M15.5 14h-.79l-.28-.27A6.47 6.47 0 0 0 16 9.5 6.5 6.5 0 1 0 9.5 16c1.61 0 3.09-.59 4.23-1.57l.27.28v.79l5 4.99L20.49 19l-4.99-5zm-6 0C7.01 14 5 11.99 5 9.5S7.01 5 9.5 5 14 7.01 14 9.5 11.99 14 9.5 14z"/></svg><svg class="abs" style="left:314.5px;top:965.7px" width="32" height="32" viewBox="0 0 100 100"><defs><clipPath id="cc2"><circle cx="50" cy="50" r="49.5"/></clipPath></defs>
<g clip-path="url(#cc2)">
<rect width="100" height="100" fill="#5ec5ea"/>
<path d="M62 8 Q85 15 95 40 L80 42 Q70 30 58 22Z" fill="#2a8ad2" opacity="0.75"/>
<path d="M60 60 Q75 70 88 92 L76 96 Q66 80 55 66Z" fill="#2f93d8" opacity="0.5"/>
<path d="M8 40 Q20 42 30 48 L10 52Z" fill="#2a8ad2" opacity="0.5"/>
<line x1="19.6" y1="59.4" x2="0.2" y2="66.7" stroke="#1f7fc8" stroke-width="3.2" opacity="0.57" stroke-linecap="round"/><line x1="16.2" y1="47.5" x2="-1.2" y2="60.9" stroke="#1f7fc8" stroke-width="1.6" opacity="0.54" stroke-linecap="round"/><line x1="63.1" y1="16.7" x2="77.1" y2="18.6" stroke="#1f7fc8" stroke-width="2.4" opacity="0.75" stroke-linecap="round"/><line x1="58.3" y1="35.3" x2="65.8" y2="34.0" stroke="#2a8fd6" stroke-width="3.2" opacity="0.81" stroke-linecap="round"/><line x1="34.9" y1="79.0" x2="38.1" y2="89.3" stroke="#8fd8f2" stroke-width="1.6" opacity="0.50" stroke-linecap="round"/><line x1="79.8" y1="67.6" x2="89.2" y2="75.1" stroke="#3aa2e0" stroke-width="0.8" opacity="0.63" stroke-linecap="round"/><line x1="53.0" y1="73.5" x2="48.2" y2="79.8" stroke="#2a8fd6" stroke-width="2.4" opacity="0.84" stroke-linecap="round"/><line x1="16.9" y1="78.6" x2="19.3" y2="105.2" stroke="#2a8fd6" stroke-width="1.2" opacity="0.69" stroke-linecap="round"/><line x1="76.7" y1="46.7" x2="83.1" y2="48.9" stroke="#3aa2e0" stroke-width="1.6" opacity="0.53" stroke-linecap="round"/><line x1="28.2" y1="88.1" x2="34.6" y2="109.9" stroke="#2a8fd6" stroke-width="1.2" opacity="0.50" stroke-linecap="round"/><line x1="21.1" y1="56.5" x2="8.2" y2="69.6" stroke="#1f7fc8" stroke-width="3.2" opacity="0.89" stroke-linecap="round"/><line x1="53.4" y1="22.6" x2="51.9" y2="10.9" stroke="#2a8fd6" stroke-width="1.2" opacity="0.61" stroke-linecap="round"/><line x1="88.5" y1="42.9" x2="99.1" y2="54.3" stroke="#1f7fc8" stroke-width="1.2" opacity="0.66" stroke-linecap="round"/><line x1="70.9" y1="22.9" x2="84.4" y2="27.8" stroke="#8fd8f2" stroke-width="1.2" opacity="0.60" stroke-linecap="round"/><line x1="53.5" y1="25.4" x2="44.6" y2="15.5" stroke="#1f7fc8" stroke-width="0.8" opacity="0.73" stroke-linecap="round"/><line x1="51.4" y1="83.0" x2="53.4" y2="94.2" stroke="#8fd8f2" stroke-width="3.2" opacity="0.83" stroke-linecap="round"/><line x1="67.5" y1="70.0" x2="81.7" y2="77.9" stroke="#1f7fc8" stroke-width="1.2" opacity="0.79" stroke-linecap="round"/><line x1="68.4" y1="78.4" x2="70.7" y2="93.6" stroke="#8fd8f2" stroke-width="2.4" opacity="0.74" stroke-linecap="round"/><line x1="34.0" y1="58.6" x2="26.6" y2="54.0" stroke="#8fd8f2" stroke-width="1.2" opacity="0.60" stroke-linecap="round"/><line x1="64.7" y1="20.6" x2="60.0" y2="8.3" stroke="#1f7fc8" stroke-width="0.8" opacity="0.59" stroke-linecap="round"/><line x1="12.2" y1="35.2" x2="-4.7" y2="37.8" stroke="#2a8fd6" stroke-width="1.2" opacity="0.53" stroke-linecap="round"/><line x1="30.9" y1="61.9" x2="28.5" y2="68.4" stroke="#1f7fc8" stroke-width="3.2" opacity="0.54" stroke-linecap="round"/><line x1="68.4" y1="71.8" x2="70.1" y2="83.6" stroke="#1f7fc8" stroke-width="3.2" opacity="0.74" stroke-linecap="round"/><line x1="75.9" y1="36.5" x2="83.0" y2="26.8" stroke="#2a8fd6" stroke-width="0.8" opacity="0.74" stroke-linecap="round"/><line x1="65.2" y1="57.7" x2="76.7" y2="55.8" stroke="#2a8fd6" stroke-width="0.8" opacity="0.68" stroke-linecap="round"/><line x1="39.0" y1="62.1" x2="20.7" y2="73.0" stroke="#3aa2e0" stroke-width="1.2" opacity="0.64" stroke-linecap="round"/><line x1="33.3" y1="11.4" x2="22.2" y2="-5.3" stroke="#8fd8f2" stroke-width="0.8" opacity="0.73" stroke-linecap="round"/><line x1="31.3" y1="31.3" x2="23.0" y2="18.6" stroke="#2a8fd6" stroke-width="0.8" opacity="0.76" stroke-linecap="round"/><line x1="91.4" y1="48.3" x2="108.4" y2="43.0" stroke="#8fd8f2" stroke-width="3.2" opacity="0.68" stroke-linecap="round"/><line x1="59.2" y1="35.1" x2="57.9" y2="15.6" stroke="#2a8fd6" stroke-width="3.2" opacity="0.69" stroke-linecap="round"/><line x1="54.5" y1="85.7" x2="52.2" y2="99.4" stroke="#3aa2e0" stroke-width="2.4" opacity="0.86" stroke-linecap="round"/><line x1="37.0" y1="64.2" x2="26.2" y2="75.3" stroke="#8fd8f2" stroke-width="1.6" opacity="0.70" stroke-linecap="round"/><line x1="51.5" y1="77.1" x2="48.5" y2="86.4" stroke="#1f7fc8" stroke-width="1.2" opacity="0.65" stroke-linecap="round"/><line x1="28.8" y1="37.8" x2="22.4" y2="34.2" stroke="#2a8fd6" stroke-width="0.8" opacity="0.88" stroke-linecap="round"/><line x1="46.6" y1="69.8" x2="49.6" y2="82.7" stroke="#8fd8f2" stroke-width="1.2" opacity="0.65" stroke-linecap="round"/><line x1="15.1" y1="45.6" x2="1.1" y2="31.3" stroke="#8fd8f2" stroke-width="3.2" opacity="0.63" stroke-linecap="round"/><line x1="61.1" y1="29.5" x2="72.5" y2="18.5" stroke="#3aa2e0" stroke-width="1.6" opacity="0.62" stroke-linecap="round"/><line x1="54.0" y1="35.0" x2="55.2" y2="27.7" stroke="#3aa2e0" stroke-width="0.8" opacity="0.59" stroke-linecap="round"/><line x1="60.4" y1="62.7" x2="71.2" y2="74.1" stroke="#3aa2e0" stroke-width="3.2" opacity="0.88" stroke-linecap="round"/><line x1="41.6" y1="30.8" x2="29.8" y2="22.6" stroke="#8fd8f2" stroke-width="0.8" opacity="0.71" stroke-linecap="round"/><line x1="71.2" y1="54.9" x2="88.7" y2="60.1" stroke="#1f7fc8" stroke-width="3.2" opacity="0.66" stroke-linecap="round"/><line x1="61.0" y1="9.3" x2="76.1" y2="8.9" stroke="#1f7fc8" stroke-width="2.4" opacity="0.68" stroke-linecap="round"/><line x1="63.6" y1="89.3" x2="63.8" y2="94.7" stroke="#3aa2e0" stroke-width="3.2" opacity="0.69" stroke-linecap="round"/><line x1="37.7" y1="32.8" x2="35.1" y2="14.6" stroke="#1f7fc8" stroke-width="0.8" opacity="0.60" stroke-linecap="round"/><line x1="36.4" y1="61.2" x2="23.8" y2="59.7" stroke="#3aa2e0" stroke-width="1.6" opacity="0.86" stroke-linecap="round"/><line x1="65.7" y1="30.0" x2="68.6" y2="24.1" stroke="#8fd8f2" stroke-width="3.2" opacity="0.81" stroke-linecap="round"/><line x1="34.2" y1="51.2" x2="17.9" y2="63.0" stroke="#1f7fc8" stroke-width="0.8" opacity="0.71" stroke-linecap="round"/><line x1="33.5" y1="10.8" x2="47.3" y2="-5.4" stroke="#8fd8f2" stroke-width="3.2" opacity="0.88" stroke-linecap="round"/><line x1="6.6" y1="52.0" x2="1.5" y2="61.9" stroke="#3aa2e0" stroke-width="3.2" opacity="0.83" stroke-linecap="round"/><line x1="31.5" y1="42.5" x2="23.6" y2="29.0" stroke="#3aa2e0" stroke-width="1.6" opacity="0.77" stroke-linecap="round"/><line x1="89.5" y1="38.5" x2="101.5" y2="26.9" stroke="#3aa2e0" stroke-width="1.2" opacity="0.73" stroke-linecap="round"/><line x1="59.4" y1="79.6" x2="60.4" y2="93.4" stroke="#2a8fd6" stroke-width="0.8" opacity="0.71" stroke-linecap="round"/><line x1="18.3" y1="72.8" x2="6.7" y2="81.6" stroke="#2a8fd6" stroke-width="1.2" opacity="0.87" stroke-linecap="round"/><line x1="8.8" y1="60.9" x2="-8.0" y2="69.6" stroke="#8fd8f2" stroke-width="1.2" opacity="0.70" stroke-linecap="round"/><line x1="27.6" y1="85.5" x2="2.4" y2="91.2" stroke="#3aa2e0" stroke-width="3.2" opacity="0.54" stroke-linecap="round"/><line x1="36.1" y1="57.7" x2="26.4" y2="59.0" stroke="#2a8fd6" stroke-width="0.8" opacity="0.58" stroke-linecap="round"/><line x1="55.1" y1="85.2" x2="61.1" y2="94.7" stroke="#8fd8f2" stroke-width="3.2" opacity="0.54" stroke-linecap="round"/><line x1="47.8" y1="31.5" x2="40.6" y2="19.0" stroke="#8fd8f2" stroke-width="1.2" opacity="0.51" stroke-linecap="round"/><line x1="23.3" y1="20.5" x2="14.1" y2="8.1" stroke="#1f7fc8" stroke-width="3.2" opacity="0.71" stroke-linecap="round"/><line x1="69.8" y1="23.2" x2="73.0" y2="2.3" stroke="#1f7fc8" stroke-width="1.6" opacity="0.63" stroke-linecap="round"/><line x1="33.1" y1="89.2" x2="14.7" y2="87.4" stroke="#1f7fc8" stroke-width="0.8" opacity="0.86" stroke-linecap="round"/><line x1="61.9" y1="63.1" x2="70.6" y2="70.7" stroke="#1f7fc8" stroke-width="2.4" opacity="0.58" stroke-linecap="round"/><line x1="23.0" y1="21.9" x2="20.0" y2="15.6" stroke="#3aa2e0" stroke-width="1.6" opacity="0.55" stroke-linecap="round"/><line x1="12.3" y1="48.7" x2="-0.6" y2="41.5" stroke="#2a8fd6" stroke-width="1.2" opacity="0.69" stroke-linecap="round"/><line x1="87.4" y1="55.8" x2="98.3" y2="72.5" stroke="#1f7fc8" stroke-width="2.4" opacity="0.58" stroke-linecap="round"/><line x1="65.1" y1="63.3" x2="73.5" y2="65.0" stroke="#2a8fd6" stroke-width="0.8" opacity="0.55" stroke-linecap="round"/><line x1="42.7" y1="34.3" x2="38.3" y2="29.1" stroke="#3aa2e0" stroke-width="2.4" opacity="0.67" stroke-linecap="round"/><line x1="37.6" y1="40.9" x2="29.3" y2="25.2" stroke="#8fd8f2" stroke-width="1.2" opacity="0.68" stroke-linecap="round"/><line x1="48.2" y1="22.9" x2="39.5" y2="16.1" stroke="#2a8fd6" stroke-width="3.2" opacity="0.63" stroke-linecap="round"/><line x1="84.7" y1="70.5" x2="91.1" y2="93.9" stroke="#1f7fc8" stroke-width="2.4" opacity="0.70" stroke-linecap="round"/>
<ellipse cx="49.9" cy="26.3" rx="12" ry="11.8" fill="#070707"/>
<ellipse cx="50.4" cy="74.8" rx="12" ry="12.3" fill="#070707"/>
<path d="M16.5 43.2 L84 42.8 Q85.5 50 84.5 57.8 L16 57.3 Q15 50 16.5 43.2Z" fill="#0b0d10"/>
<text x="50" y="52.6" font-family="Liberation Sans" font-size="5.8" font-style="italic" fill="#d8d8d8" text-anchor="middle" letter-spacing="1.5">DIVIDE</text>
</g></svg><div class="t" style="left:354.70px;top:974.79px;font-size:13.6px;color:#f2f2f2;font-weight:normal;font-family:"Liberation Sans",sans-serif;">Aniket Ghosh</div><svg class="abs" style="left:1076px;top:975.7px" width="10" height="12" viewBox="0 0 16 22">
<rect x="5" y="1" width="6" height="12" rx="3" fill="#e6e6e6"/>
<path d="M2.3 10 q0 6 5.7 6 q5.7 0 5.7 -6" fill="none" stroke="#e6e6e6" stroke-width="2"/>
<rect x="7" y="16" width="2" height="4.5" fill="#e6e6e6"/></svg><svg class="abs" style="left:1094.5px;top:975.7px" width="12.3" height="12.3" viewBox="0 0 24 24"><path fill="#dc433b" d="M21 6.5l-4 4V7c0-.55-.45-1-1-1H9.82L21 17.18V6.5zM3.27 2L2 3.27 4.73 6H4c-.55 0-1 .45-1 1v10c0 .55.45 1 1 1h12c.21 0 .39-.08.54-.18L19.73 21 21 19.73 3.27 2z"/></svg><div class="abs" style="left:1114.5px;top:970.7px;width:22px;height:22px;border-radius:50%;background:#19232d"></div><div class="abs" style="left:1118.4px;top:979.9px;width:3.6px;height:3.6px;border-radius:50%;background:#f0f0f0"></div><div class="abs" style="left:1123.7px;top:979.9px;width:3.6px;height:3.6px;border-radius:50%;background:#f0f0f0"></div><div class="abs" style="left:1129.0px;top:979.9px;width:3.6px;height:3.6px;border-radius:50%;background:#f0f0f0"></div><div class="abs" style="left:314.5px;top:1014.1px;width:32px;height:32px;border-radius:50%;background:#0a97a6"></div><div class="t" style="left:326.30px;top:1022.16px;font-size:16px;color:#ffffff;font-weight:normal;font-family:"Liberation Sans",sans-serif;">a</div><div class="t" style="left:354.70px;top:1023.19px;font-size:13.6px;color:#f2f2f2;font-weight:normal;font-family:"Liberation Sans",sans-serif;">aniket (Me)</div><svg class="abs" style="left:1076px;top:1024.1px" width="10" height="12" viewBox="0 0 16 22">
<rect x="5" y="1" width="6" height="12" rx="3" fill="#e6e6e6"/>
<path d="M2.3 10 q0 6 5.7 6 q5.7 0 5.7 -6" fill="none" stroke="#e6e6e6" stroke-width="2"/>
<rect x="7" y="16" width="2" height="4.5" fill="#e6e6e6"/></svg><svg class="abs" style="left:1094.5px;top:1024.1px" width="12.3" height="12.3" viewBox="0 0 24 24"><path fill="#dc433b" d="M21 6.5l-4 4V7c0-.55-.45-1-1-1H9.82L21 17.18V6.5zM3.27 2L2 3.27 4.73 6H4c-.55 0-1 .45-1 1v10c0 .55.45 1 1 1h12c.21 0 .39-.08.54-.18L19.73 21 21 19.73 3.27 2z"/></svg><div class="abs" style="left:1114.5px;top:1019.1px;width:22px;height:22px;border-radius:50%;background:#19232d"></div><div class="abs" style="left:1118.4px;top:1028.3px;width:3.6px;height:3.6px;border-radius:50%;background:#f0f0f0"></div><div class="abs" style="left:1123.7px;top:1028.3px;width:3.6px;height:3.6px;border-radius:50%;background:#f0f0f0"></div><div class="abs" style="left:1129.0px;top:1028.3px;width:3.6px;height:3.6px;border-radius:50%;background:#f0f0f0"></div><div class="abs" style="left:1902px;top:0;width:2px;height:1032px;background:#47474c"></div><div class="abs" style="left:1902px;top:1032px;width:2px;height:15px;background:#565a66"></div></div></body></html>
